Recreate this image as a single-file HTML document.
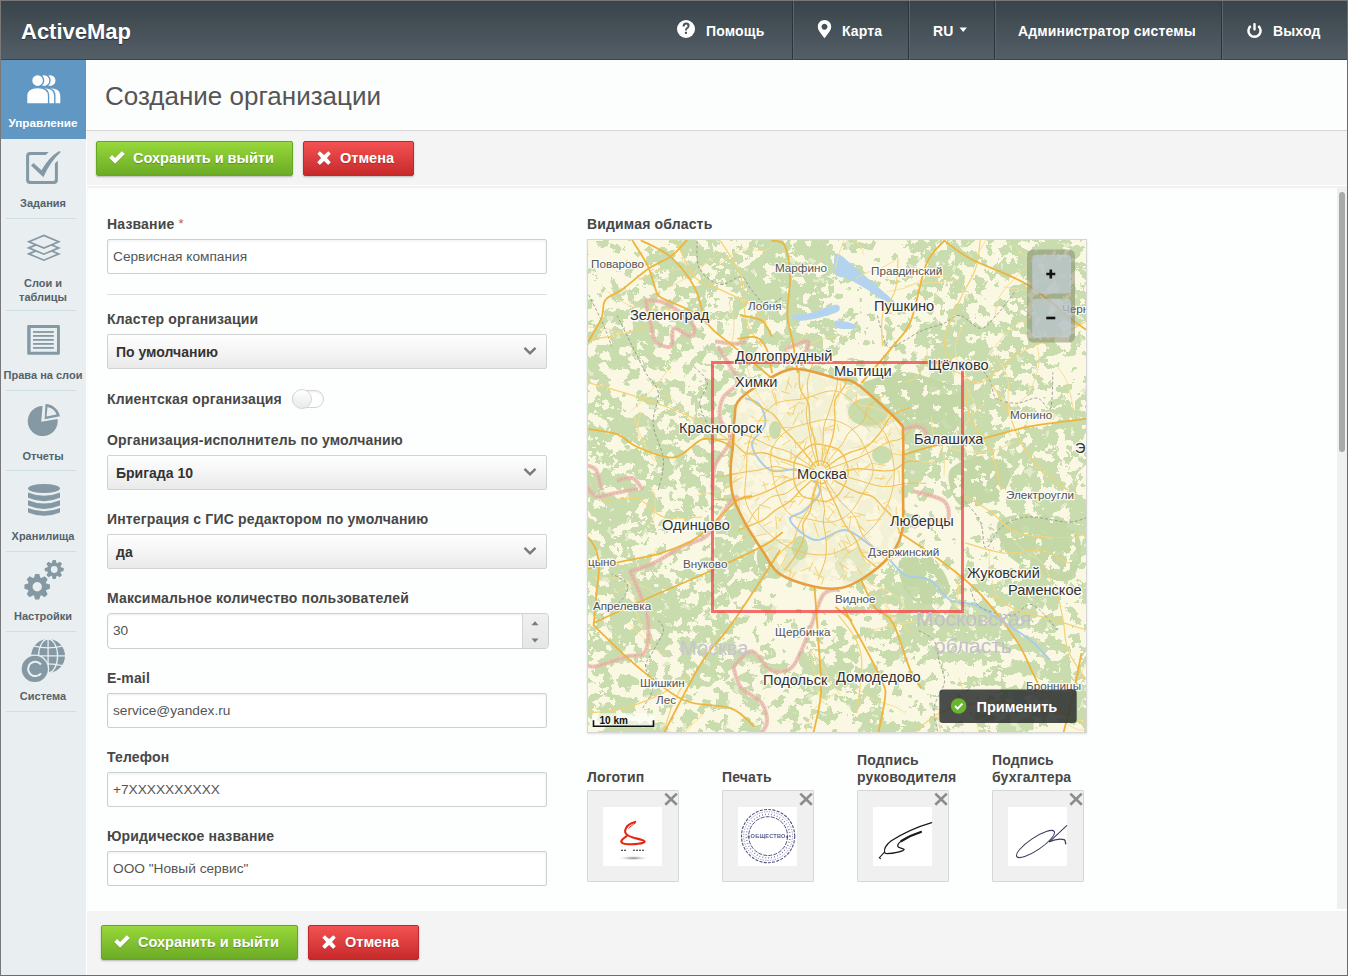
<!DOCTYPE html>
<html><head><meta charset="utf-8">
<style>
*{box-sizing:border-box;margin:0;padding:0}
html,body{width:1348px;height:976px;overflow:hidden;background:#fff}
body{font-family:"Liberation Sans",sans-serif;position:relative}
.abs{position:absolute}
#frame{position:absolute;left:0;top:0;width:1348px;height:976px;border:1px solid #787878;border-right-color:#6c6c6c;border-bottom-color:#6c6c6c;pointer-events:none;z-index:50}
#hdr{position:absolute;left:0;top:0;width:1348px;height:60px;background:linear-gradient(#39434a,#535e66);border-bottom:1px solid #3b444a}
#logo{position:absolute;left:21px;top:19px;font-size:22px;font-weight:bold;color:#fff;letter-spacing:0px;text-shadow:0 1px 1px rgba(0,0,0,.5)}
.nav{position:absolute;top:0;height:60px;color:#fff;font-size:14px;font-weight:bold;letter-spacing:.15px}
.nav span{position:absolute;top:23px;white-space:nowrap}
.sep{position:absolute;top:1px;width:2px;height:59px;border-left:1px solid #2d353b;border-right:1px solid #5a666d}
#side{position:absolute;left:0;top:60px;width:86px;height:916px;background:#e9eef1}
.si{position:absolute;left:0;width:86px;text-align:center;font-size:11px;font-weight:bold;color:#56626a}
.si .lbl{position:absolute;left:0;width:86px;text-align:center;line-height:13px}
.sline{position:absolute;left:6px;width:70px;height:1px;background:#cfdde5}
#main{position:absolute;left:86px;top:60px;width:1261px;height:915px;background:#fff}
#titlebar{position:absolute;left:0;top:0;width:1261px;height:71px;background:#fcfdfd;border-bottom:1px solid #d6d6d6}
#title{position:absolute;left:19px;top:21px;font-size:26px;color:#555;white-space:nowrap}
.tb{position:absolute;left:1px;width:1260px;background:#f4f4f4}
.btn{position:absolute;height:35px;border-radius:2px;color:#fff;font-size:14.5px;font-weight:bold;white-space:nowrap;text-shadow:0 1px 1px rgba(0,0,0,.25)}
.bg{background:linear-gradient(#97d83a,#6cab26);border:1px solid #64a823;box-shadow:0 1px 2px rgba(0,0,0,.25)}
.br{background:linear-gradient(#f45252,#c7292b);border:1px solid #c0292b;box-shadow:0 1px 2px rgba(0,0,0,.25)}
.btn span{position:absolute;top:8px}
#panel{position:absolute;left:1px;top:126px;width:1260px;height:723px;background:#fdfefe;box-shadow:inset 0 2px 2px rgba(0,0,0,.06)}
.lab{position:absolute;font-size:14px;font-weight:bold;color:#474747;white-space:nowrap;line-height:16px;letter-spacing:.16px}
.inp{position:absolute;left:107px;width:440px;height:35px;border:1px solid #cbd0d5;border-radius:2px;background:#fff;box-shadow:inset 0 1px 3px rgba(0,0,0,.07)}
.inp span{position:absolute;left:5px;top:9px;font-size:13.7px;color:#555;line-height:16px;white-space:nowrap}
.sel{position:absolute;left:107px;width:440px;height:35px;border:1px solid #d2d2d2;border-radius:2px;background:linear-gradient(#fefefe 0%,#f6f6f6 45%,#e9e9e9 100%)}
.sel span{position:absolute;left:8px;top:9px;font-size:14px;font-weight:bold;color:#333;line-height:16px;white-space:nowrap}
.chev{position:absolute;left:415px;top:11.3px;width:14px;height:10px}
.ibox{position:absolute;width:92px;height:92px;background:#f0f0f0;border:1px solid #d6d6d6;border-radius:1px}
.ibox .img{position:absolute;left:15px;top:16px;width:59px;height:59px;background:#fff}
.ibox .x{position:absolute;right:2px;top:2px;width:12px;height:12px}
</style></head><body>
<div id="hdr">
  <div id="logo">ActiveMap</div>
  <div class="sep" style="left:792px"></div>
  <div class="sep" style="left:908px"></div>
  <div class="sep" style="left:994px"></div>
  <div class="sep" style="left:1221px"></div>
  <svg class="abs" style="left:0;top:0" width="1348" height="60">
    <circle cx="686" cy="29" r="9" fill="#fff"/>
    <path d="M682.6,26.6 Q682.6,22.6 686.2,22.6 Q689.6,22.6 689.6,25.8 Q689.6,27.6 687.6,28.8 Q686.9,29.3 686.9,30.6 L685,30.6 Q685,28.4 686.4,27.6 Q687.5,26.9 687.5,25.9 Q687.5,24.5 686.1,24.5 Q684.7,24.5 684.7,26.6 Z" fill="#47525a"/>
    <rect x="684.9" y="31.8" width="2.1" height="2.1" fill="#47525a"/>
    <path d="M824.5,20 C820.6,20 817.8,23 817.8,26.7 C817.8,30.6 822,34.5 824.5,38.3 C827,34.5 831.2,30.6 831.2,26.7 C831.2,23 828.4,20 824.5,20 Z M824.5,23.7 A3,3 0 1,1 824.49,23.7 Z" fill="#fff" fill-rule="evenodd"/>
    <path d="M959.5,27.6 L966.9,27.6 L963.2,32 Z" fill="#fff"/>
    <path d="M1250.7,26 A6.1,6.1 0 1,0 1258.3,26" fill="none" stroke="#fff" stroke-width="2.5"/>
    <rect x="1253.3" y="23" width="2.4" height="7.4" rx="1" fill="#fff"/>
  </svg>
  <div class="nav" style="left:706px"><span>Помощь</span></div>
  <div class="nav" style="left:842px"><span>Карта</span></div>
  <div class="nav" style="left:933px"><span>RU</span></div>
  <div class="nav" style="left:1018px"><span>Администратор системы</span></div>
  <div class="nav" style="left:1273px"><span>Выход</span></div>
</div>
<div id="side">
  <div class="abs" style="left:1px;top:0;width:85px;height:79px;background:#6097c3"></div>
  <div class="sline" style="top:158px"></div>
  <div class="sline" style="top:250px"></div>
  <div class="sline" style="top:330px"></div>
  <div class="sline" style="top:410px"></div>
  <div class="sline" style="top:491px"></div>
  <div class="sline" style="top:571px"></div>
  <div class="sline" style="top:651px"></div>
  <div class="si" style="top:0;color:#fff"><div class="lbl" style="top:56px;color:#fff;font-size:11.7px">Управление</div></div>
  <div class="si"><div class="lbl" style="top:136.5px">Задания</div></div>
  <div class="si"><div class="lbl" style="top:216px;line-height:14px">Слои и<br>таблицы</div></div>
  <div class="si"><div class="lbl" style="top:308.5px">Права на слои</div></div>
  <div class="si"><div class="lbl" style="top:389.5px">Отчеты</div></div>
  <div class="si"><div class="lbl" style="top:469.5px">Хранилища</div></div>
  <div class="si"><div class="lbl" style="top:549.5px">Настройки</div></div>
  <div class="si"><div class="lbl" style="top:629.5px">Система</div></div>
  <svg class="abs" style="left:0;top:-60px" width="86" height="976">
    <g fill="#fff" stroke="#6097c3" stroke-width="1.4">
      <circle cx="50.2" cy="80.6" r="6"/>
      <path d="M38.5,103.9 L38.5,95.5 Q38.5,87.6 49.6,87.6 Q61,87.6 61,95.5 L61,103.9 Z"/>
      <circle cx="44" cy="80.6" r="6"/>
      <path d="M32.3,103.9 L32.3,95.5 Q32.3,87.6 43.4,87.6 Q54.8,87.6 54.8,95.5 L54.8,103.9 Z"/>
      <circle cx="37.6" cy="80.6" r="6"/>
      <path d="M26.6,103.9 L26.6,96 Q26.6,87.6 37.6,87.6 Q48.6,87.6 48.6,96 L48.6,103.9 Z"/>
    </g>
    <g fill="#8499a4">
      <path d="M30.5,152 L48.7,152 L45.8,155 L30.5,155 Q29.1,155 29.1,156.4 L29.1,179.6 Q29.1,181 30.5,181 L53.5,181 Q54.9,181 54.9,179.6 L54.9,163.6 L57.9,160.6 L57.9,180 Q57.9,184 53.9,184 L30.1,184 Q26.1,184 26.1,180 L26.1,156 Q26.1,152 30.1,152 Z"/>
      <path d="M31,165.4 L33.5,162.9 L41.5,170.2 Q49,157 58.8,151.2 Q60.3,150.9 60.8,152.1 Q50,162 43.4,177.3 Z"/>
    </g>
    <g fill="none" stroke="#8499a4" stroke-width="1.7" stroke-linejoin="miter">
      <path d="M28.8,253.9 L43.9,247.5 L58.8,253.9 L43.9,260.2 Z" fill="#e9eef1"/>
      <path d="M28.8,247.9 L43.9,241.6 L58.8,247.9 L43.9,254.2 Z" fill="#e9eef1"/>
      <path d="M28.8,241.8 L43.9,235.5 L58.8,241.8 L43.9,248.1 Z" fill="#e9eef1"/>
    </g>
    <g fill="#8499a4">
      <path d="M28.5,325 L58.6,325 Q59.9,325 59.9,326.3 L59.9,353.4 Q59.9,354.7 58.6,354.7 L28.5,354.7 Q27.2,354.7 27.2,353.4 L27.2,326.3 Q27.2,325 28.5,325 Z M30.6,328 L30.6,351.7 L57,351.7 L57,328 Z" fill-rule="evenodd"/>
      <rect x="33" y="331.1" width="20.8" height="1.8"/>
      <rect x="33" y="335" width="20.8" height="1.8"/>
      <rect x="33" y="339" width="20.8" height="1.8"/>
      <rect x="33" y="343" width="20.8" height="1.8"/>
      <rect x="33" y="347" width="20.8" height="1.8"/>
    </g>
    <g fill="#8499a4">
      <path d="M41.2,421.7 L42.6,406.1 A15,15 0 1,0 57.6,419.1 Z"/>
      <path d="M45.5,404.1 A15,15 0 0,1 59.9,416.3 L44.6,419.2 Z M47.5,407 L46.5,416.6 L56.6,414.6 A12,12 0 0,0 47.5,407 Z" fill-rule="evenodd"/>
    </g>
    <g fill="#8499a4">
      <ellipse cx="44" cy="488.5" rx="16" ry="4.6"/>
      <path d="M28,492.4 Q44,499 60,492.4 L60,497.8 Q44,504.6 28,497.8 Z"/>
      <path d="M28,500.2 Q44,506.8 60,500.2 L60,505.6 Q44,512.4 28,505.6 Z"/>
      <path d="M28,508 Q44,514.6 60,508 L60,512.4 Q44,519 28,512.4 Z"/>
    </g>
    <g fill="#8499a4" fill-rule="evenodd" transform="translate(18,560)">
      <path d="M34.01,17.64 L35.11,13.97 L39.29,13.97 L40.39,17.64 L41.35,18.04 L44.72,16.22 L47.68,19.18 L45.86,22.55 L46.26,23.51 L49.93,24.61 L49.93,28.79 L46.26,29.89 L45.86,30.85 L47.68,34.22 L44.72,37.18 L41.35,35.36 L40.39,35.76 L39.29,39.43 L35.11,39.43 L34.01,35.76 L33.05,35.36 L29.68,37.18 L26.72,34.22 L28.54,30.85 L28.14,29.89 L24.47,28.79 L24.47,24.61 L28.14,23.51 L28.54,22.55 L26.72,19.18 L29.68,16.22 L33.05,18.04Z M41.90,26.70 A4.7,4.7 0 1,0 32.50,26.70 A4.7,4.7 0 1,0 41.90,26.70Z" transform="translate(-18,0)"/>
      <path d="M51.85,2.91 L52.71,0.02 L55.69,0.02 L56.55,2.91 L57.20,3.17 L59.85,1.74 L61.96,3.85 L60.53,6.50 L60.79,7.15 L63.68,8.01 L63.68,10.99 L60.79,11.85 L60.53,12.50 L61.96,15.15 L59.85,17.26 L57.20,15.83 L56.55,16.09 L55.69,18.98 L52.71,18.98 L51.85,16.09 L51.20,15.83 L48.55,17.26 L46.44,15.15 L47.87,12.50 L47.61,11.85 L44.72,10.99 L44.72,8.01 L47.61,7.15 L47.87,6.50 L46.44,3.85 L48.55,1.74 L51.20,3.17Z M57.60,9.50 A3.4,3.4 0 1,0 50.80,9.50 A3.4,3.4 0 1,0 57.60,9.50Z" transform="translate(-18,0)"/>
    </g>
    <g>
      <circle cx="48.1" cy="655.9" r="16.9" fill="#8499a4"/>
      <g fill="none" stroke="#e9eef1" stroke-width="1.3">
        <ellipse cx="48.1" cy="655.9" rx="9.5" ry="16.9"/>
        <line x1="48.1" y1="639" x2="48.1" y2="673"/>
        <line x1="31" y1="655.9" x2="65" y2="655.9"/>
        <path d="M34,646.2 Q48.1,649.5 62.2,646.2"/>
        <path d="M34,665.6 Q48.1,662.3 62.2,665.6"/>
      </g>
      <circle cx="34.8" cy="668.9" r="14.4" fill="#e9eef1"/>
      <circle cx="34.8" cy="668.9" r="13.1" fill="#8499a4"/>
      <path d="M41,664.5 A7.2,7.2 0 1,0 41,673.3" fill="none" stroke="#e9eef1" stroke-width="2.1"/>
    </g>
  </svg>
</div>
<div id="main">
  <div id="titlebar"><div id="title">Создание организации</div></div>
  <div class="tb" style="top:71px;height:54px">
    <div class="btn bg" style="left:9px;top:10px;width:197px"><span style="left:36px">Сохранить и выйти</span></div>
    <div class="btn br" style="left:216px;top:10px;width:111px"><span style="left:36px">Отмена</span></div>
  </div>
  <div id="panel"></div>
  <div class="tb" style="top:851px;height:64px">
    <div class="btn bg" style="left:14px;top:14px;width:197px"><span style="left:36px">Сохранить и выйти</span></div>
    <div class="btn br" style="left:221px;top:14px;width:111px"><span style="left:36px">Отмена</span></div>
  </div>
</div>
<div id="form" class="abs" style="left:0;top:0;width:1348px;height:976px">
  <div class="lab" style="left:107px;top:216px">Название <span style="color:#b55a55;font-weight:normal;font-size:13px;position:relative;top:-1px">*</span></div>
  <div class="inp" style="top:239px"><span>Сервисная компания</span></div>
  <div class="abs" style="left:107px;top:294px;width:440px;height:1px;background:#dedede"></div>
  <div class="lab" style="left:107px;top:311px">Кластер организации</div>
  <div class="sel" style="top:334px"><span>По умолчанию</span><svg class="chev" viewBox="0 0 14 10"><path d="M1.5,1.8 L7,7.4 L12.5,1.8" fill="none" stroke="#7a7a7a" stroke-width="2.4"/></svg></div>
  <div class="lab" style="left:107px;top:391px">Клиентская организация</div>
  <div class="abs" style="left:292px;top:390px;width:32px;height:18px;border:1px solid #d4d4d4;border-radius:9px;background:#fff;box-shadow:inset 0 1px 2px rgba(0,0,0,.08)"></div>
  <div class="abs" style="left:292px;top:389px;width:20px;height:20px;border:1px solid #d6d6d6;border-radius:50%;background:linear-gradient(#fff,#e9e9e9)"></div>
  <div class="lab" style="left:107px;top:432px">Организация-исполнитель по умолчанию</div>
  <div class="sel" style="top:455px"><span>Бригада 10</span><svg class="chev" viewBox="0 0 14 10"><path d="M1.5,1.8 L7,7.4 L12.5,1.8" fill="none" stroke="#7a7a7a" stroke-width="2.4"/></svg></div>
  <div class="lab" style="left:107px;top:511px">Интеграция с ГИС редактором по умолчанию</div>
  <div class="sel" style="top:534px"><span>да</span><svg class="chev" viewBox="0 0 14 10"><path d="M1.5,1.8 L7,7.4 L12.5,1.8" fill="none" stroke="#7a7a7a" stroke-width="2.4"/></svg></div>
  <div class="lab" style="left:107px;top:590px">Максимальное количество пользователей</div>
  <div class="inp" style="top:613px;width:442px;height:36px;border-radius:4px"><span>30</span>
    <div class="abs" style="left:414px;top:0;width:26px;height:34px;border-left:1px solid #d4d4d4;background:linear-gradient(#f0f0f0,#e6e6e6);border-radius:0 3px 3px 0"></div>
    <svg class="abs" style="left:414px;top:0" width="26" height="33"><path d="M9.5,11.2 L16.5,11.2 L13,7.2 Z M9.5,24.6 L16.5,24.6 L13,28.6 Z" fill="#7a7a7a"/></svg>
  </div>
  <div class="lab" style="left:107px;top:670px">E-mail</div>
  <div class="inp" style="top:693px"><span>service@yandex.ru</span></div>
  <div class="lab" style="left:107px;top:749px">Телефон</div>
  <div class="inp" style="top:772px"><span>+7XXXXXXXXXX</span></div>
  <div class="lab" style="left:107px;top:828px">Юридическое название</div>
  <div class="inp" style="top:851px"><span>ООО "Новый сервис"</span></div>
  <div class="lab" style="left:587px;top:216px">Видимая область</div>
</div>
<svg class="abs" style="left:0;top:0;z-index:5" width="1348" height="976"><g fill="#fff" style="filter:drop-shadow(0 1px 0 rgba(0,0,0,.15))">
<path d="M109.3,158.1 L112.1,155.1 L115.1,157.9 L121.8,151.2 L124.8,154.1 L115.1,163.8Z"/><path d="M317.3,153.8 L319.8,151.2 L324.1,155.1 L328.3,151.2 L330.8,153.8 L327.0,158.1 L330.8,162.3 L328.2,165.0 L324.1,161.0 L319.8,165.0 L317.2,162.3 L321.1,158.1Z"/><path d="M114.3,942.1 L117.1,939.1 L120.1,941.9 L126.8,935.2 L129.8,938.1 L120.1,947.8Z"/><path d="M322.3,937.8 L324.8,935.2 L329.1,939.1 L333.3,935.2 L335.8,937.8 L332.0,942.1 L335.8,946.3 L333.2,949.0 L329.1,945.0 L324.8,949.0 L322.2,946.3 L326.1,942.1Z"/></g></svg>
<div class="abs" style="left:1337px;top:187px;width:10px;height:722px;background:#f0f0f0"></div>
<div class="abs" style="left:1339px;top:192px;width:6px;height:260px;border-radius:3px;background:#a9a9a9"></div>
<div class="lab" style="left:587px;top:769px;line-height:17px">Логотип</div>
<div class="ibox" style="left:587px;top:790px"><div class="img"></div></div>
<div class="lab" style="left:722px;top:769px;line-height:17px">Печать</div>
<div class="ibox" style="left:722px;top:790px"><div class="img"></div></div>
<div class="lab" style="left:857px;top:752px;line-height:17px">Подпись<br>руководителя</div>
<div class="ibox" style="left:857px;top:790px"><div class="img"></div></div>
<div class="lab" style="left:992px;top:752px;line-height:17px">Подпись<br>бухгалтера</div>
<div class="ibox" style="left:992px;top:790px"><div class="img"></div></div>
<svg class="abs" style="left:0;top:0;z-index:6" width="1348" height="976"><path d="M665.3,793.6 L676.8,804.7 M676.8,793.6 L665.3,804.7" stroke="#8c8c8c" stroke-width="2.6" fill="none"/><path d="M800.3,793.6 L811.8,804.7 M811.8,793.6 L800.3,804.7" stroke="#8c8c8c" stroke-width="2.6" fill="none"/><path d="M935.3,793.6 L946.8,804.7 M946.8,793.6 L935.3,804.7" stroke="#8c8c8c" stroke-width="2.6" fill="none"/><path d="M1070.3,793.6 L1081.8,804.7 M1081.8,793.6 L1070.3,804.7" stroke="#8c8c8c" stroke-width="2.6" fill="none"/><defs><radialGradient id="shd"><stop offset="0" stop-color="#777"/><stop offset="1" stop-color="#fff" stop-opacity="0"/></radialGradient></defs>
<ellipse cx="633.4" cy="858.1" rx="17" ry="2.4" fill="url(#shd)"/>
<path d="M635.2,821.9 C631,823 626,826 625.1,830.5 C624.6,834 628,836 633,837.6 C638,839 644.6,840 644.6,841.6 C644,843.6 634,844.6 627.9,844.2 C623,844 620.5,842.6 621.6,840.6 C622.4,839 625,837.4 626.5,836.1" fill="none" stroke="#e52610" stroke-width="2.1" stroke-linecap="round"/>
<path d="M635.8,822.6 C633,825 630,826.5 628.6,828.4" fill="none" stroke="#e52610" stroke-width="1"/>
<path d="M621,850.2 h2 M624,850.2 h2 M633,850.2 h2 M636,850.2 h2 M639,850.2 h2 M642,850.2 h2" stroke="#222" stroke-width="1.1"/>
<g fill="none" stroke="#3d3f7a">
<circle cx="768.1" cy="836.1" r="26.6" stroke-width="1.1" stroke-dasharray="3 1.3" opacity=".9"/>
<circle cx="768.1" cy="836.1" r="24.4" stroke-width=".7" stroke-dasharray="1.2 1.3" opacity=".8"/>
<circle cx="768.1" cy="836.1" r="21.8" stroke-width="1.6" stroke-dasharray=".8 2.2" opacity=".7"/>
<circle cx="768.1" cy="836.1" r="19.4" stroke-width="1" stroke-dasharray="4 1.2" opacity=".9"/>
</g>
<text x="768.1" y="838.3" text-anchor="middle" style="font-family:Liberation Sans,sans-serif;font-size:5.6px;font-weight:bold;letter-spacing:.2px" fill="#3d3f7a" opacity=".85">«ОБЩЕСТВО»</text>
<g fill="none" stroke="#1a1a1a" stroke-linecap="round">
<path d="M931.7,822.6 C920,826 905,832 890.9,841 C886,845 883.9,849 884.6,852.2" stroke-width="1.2"/>
<path d="M920.9,832 C913,834.5 905,838 901.4,841 C898.5,843 897.5,845.5 897.9,846.6 C899,848 903.6,848.6 904.1,849.4 C904,851 894,853.6 886.7,853.6 C885,853.4 884.5,852.6 884.5,852.2" stroke-width="1.3"/>
<path d="M920.9,832 C913,834.5 906,838 901.4,841" stroke-width="2.2"/>
<path d="M884.5,852.2 L879.4,857.7 L880.4,858.6" stroke-width="1.1"/>
</g>
<g fill="none" stroke="#3a3f60" stroke-width="1.1" stroke-linecap="round">
<ellipse cx="1035.5" cy="844" rx="22.5" ry="6.2" transform="rotate(-34 1035.5 844)"/>
<path d="M1049.6,841.7 L1066.7,825.7"/>
<path d="M1049.6,841.7 C1054,839.6 1060,838.6 1064.2,839.6 C1066,840.6 1065,842.6 1065.8,843.8" stroke-width="1.3"/>
</g>
</svg>
<!--MAP-->
<div class="abs" style="left:587px;top:239px;width:500px;height:494px;border:1px solid #d6d6d6;box-shadow:0 1px 2px rgba(0,0,0,.12);z-index:3"></div>
<svg class="abs" style="left:588px;top:240px;z-index:4" width="498" height="492" viewBox="0 0 498 492">
<defs>
<filter id="fo" x="0" y="0" width="498" height="492" filterUnits="userSpaceOnUse" color-interpolation-filters="sRGB">
<feTurbulence type="fractalNoise" baseFrequency="0.085" numOctaves="4" seed="11" result="m1"/>
<feColorMatrix in="m1" type="matrix" values="1 0 0 0 0  1 0 0 0 0  1 0 0 0 0  0 0 0 0 1" result="n1"/>
<feTurbulence type="fractalNoise" baseFrequency="0.012" numOctaves="2" seed="4" result="m2"/>
<feColorMatrix in="m2" type="matrix" values="1 0 0 0 0  1 0 0 0 0  1 0 0 0 0  0 0 0 0 1" result="n2"/>
<feComposite in="n1" in2="n2" operator="arithmetic" k1="0" k2="0.8" k3="0.5" k4="-0.15" result="n"/>
<feColorMatrix in="n" type="matrix" values="0 0 0 0 0  0 0 0 0 0  0 0 0 0 0  1 0 0 0 0" result="a"/>
<feComponentTransfer in="a" result="t"><feFuncA type="discrete" tableValues="1 1 1 1 1 1 1 1 1 1 0 0 0 0 0 0 0 0 0 0"/></feComponentTransfer>
<feFlood flood-color="#c8dcae" result="g"/>
<feComposite in="g" in2="t" operator="in"/>
</filter>
<filter id="fo2" x="0" y="0" width="498" height="492" filterUnits="userSpaceOnUse" color-interpolation-filters="sRGB">
<feTurbulence type="fractalNoise" baseFrequency="0.11" numOctaves="3" seed="3" result="n"/>
<feColorMatrix in="n" type="matrix" values="0 0 0 0 0  0 0 0 0 0  0 0 0 0 0  1 0 0 0 0" result="a"/>
<feComponentTransfer in="a" result="t"><feFuncA type="discrete" tableValues="1 1 1 0 0 0 0 0 0 0"/></feComponentTransfer>
<feFlood flood-color="#faf7e2" result="g"/>
<feComposite in="g" in2="t" operator="in"/>
</filter>
<filter id="fod" x="0" y="0" width="498" height="492" filterUnits="userSpaceOnUse" color-interpolation-filters="sRGB">
<feTurbulence type="fractalNoise" baseFrequency="0.09" numOctaves="4" seed="23" result="m1"/>
<feColorMatrix in="m1" type="matrix" values="0 0 0 0 0  0 0 0 0 0  0 0 0 0 0  1 0 0 0 0" result="a"/>
<feComponentTransfer in="a" result="t"><feFuncA type="discrete" tableValues="1 1 1 1 1 1 1 1 1 1 1 1 0 0 0 0 0 0 0 0"/></feComponentTransfer>
<feFlood flood-color="#c3d8a6" result="g"/>
<feComposite in="g" in2="t" operator="in"/>
</filter>
<mask id="cityMask"><rect width="498" height="492" fill="#fff"/><path d="M153.0,158.0 C160.9,150.2 183.3,136.7 194.0,132.0 C204.7,127.3 207.7,128.8 217.0,130.0 C226.3,131.2 241.4,136.7 250.0,139.0 C258.6,141.3 258.7,137.0 268.7,144.0 C278.7,151.0 302.3,172.7 310.0,181.0 C317.7,189.3 314.2,185.8 315.0,194.0 C315.8,202.2 315.0,220.7 315.0,230.0 C315.0,239.3 315.2,239.6 315.0,250.0 C314.8,260.4 316.4,281.1 313.8,292.5 C311.2,303.9 306.3,310.5 299.6,318.3 C292.9,326.0 281.6,334.1 273.8,339.0 C266.0,343.9 260.9,346.7 253.0,348.0 C245.1,349.3 236.7,349.1 226.5,346.7 C216.3,344.3 200.0,339.4 191.6,333.8 C183.2,328.2 181.6,321.2 176.0,313.0 C170.4,304.8 163.2,294.2 158.0,284.7 C152.8,275.2 147.6,265.1 145.0,256.0 C142.4,246.9 142.6,238.6 142.6,230.0 C142.6,221.4 144.3,213.2 145.0,204.6 C145.7,196.1 145.2,186.5 146.5,178.7 C147.8,170.9 145.1,165.8 153.0,158.0Z" fill="#666"/></mask>
<clipPath id="mclip"><rect width="498" height="492"/></clipPath>
</defs>
<g clip-path="url(#mclip)">
<rect width="498" height="492" fill="#faf7e2"/>
<g mask="url(#cityMask)"><rect width="498" height="492" filter="url(#fo)"/></g>
<rect width="498" height="492" filter="url(#fo2)" opacity=".55"/>

<clipPath id="bigfc"><path d="M258.0,152.0 C261.7,147.0 272.2,143.3 282.0,140.0 C291.8,136.7 306.2,132.0 317.0,132.0 C327.8,132.0 337.5,136.7 347.0,140.0 C356.5,143.3 369.8,145.3 374.0,152.0 C378.2,158.7 374.8,172.0 372.0,180.0 C369.2,188.0 364.5,198.0 357.0,200.0 C349.5,202.0 334.7,195.2 327.0,192.0 C319.3,188.8 316.8,181.7 311.0,181.0 C305.2,180.3 298.5,187.3 292.0,188.0 C285.5,188.7 277.3,188.0 272.0,185.0 C266.7,182.0 262.3,175.5 260.0,170.0 C257.7,164.5 254.3,157.0 258.0,152.0Z"/><path d="M250.0,310.0 C253.7,306.3 264.3,307.0 270.0,308.0 C275.7,309.0 282.3,311.5 284.0,316.0 C285.7,320.5 283.7,330.7 280.0,335.0 C276.3,339.3 267.3,342.8 262.0,342.0 C256.7,341.2 250.0,335.3 248.0,330.0 C246.0,324.7 246.3,313.7 250.0,310.0Z"/><path d="M172.0,305.0 C177.0,300.0 195.3,297.5 202.0,300.0 C208.7,302.5 213.7,314.2 212.0,320.0 C210.3,325.8 198.7,333.3 192.0,335.0 C185.3,336.7 175.3,335.0 172.0,330.0 C168.7,325.0 167.0,310.0 172.0,305.0Z"/><path d="M362.0,230.0 C367.0,221.7 392.0,214.2 402.0,215.0 C412.0,215.8 421.2,227.5 422.0,235.0 C422.8,242.5 415.3,255.0 407.0,260.0 C398.7,265.0 379.5,270.0 372.0,265.0 C364.5,260.0 357.0,238.3 362.0,230.0Z"/><path d="M412.0,280.0 C419.5,274.2 448.7,271.7 462.0,275.0 C475.3,278.3 488.7,289.2 492.0,300.0 C495.3,310.8 490.3,335.0 482.0,340.0 C473.7,345.0 452.8,335.0 442.0,330.0 C431.2,325.0 422.0,318.3 417.0,310.0 C412.0,301.7 404.5,285.8 412.0,280.0Z"/><path d="M312.0,320.0 C316.2,314.2 333.7,310.0 342.0,315.0 C350.3,320.0 362.8,341.7 362.0,350.0 C361.2,358.3 344.5,365.0 337.0,365.0 C329.5,365.0 321.2,357.5 317.0,350.0 C312.8,342.5 307.8,325.8 312.0,320.0Z"/></clipPath>
<rect width="498" height="492" filter="url(#fod)" clip-path="url(#bigfc)"/>
<path d="M153.0,158.0 C160.9,150.2 183.3,136.7 194.0,132.0 C204.7,127.3 207.7,128.8 217.0,130.0 C226.3,131.2 241.4,136.7 250.0,139.0 C258.6,141.3 258.7,137.0 268.7,144.0 C278.7,151.0 302.3,172.7 310.0,181.0 C317.7,189.3 314.2,185.8 315.0,194.0 C315.8,202.2 315.0,220.7 315.0,230.0 C315.0,239.3 315.2,239.6 315.0,250.0 C314.8,260.4 316.4,281.1 313.8,292.5 C311.2,303.9 306.3,310.5 299.6,318.3 C292.9,326.0 281.6,334.1 273.8,339.0 C266.0,343.9 260.9,346.7 253.0,348.0 C245.1,349.3 236.7,349.1 226.5,346.7 C216.3,344.3 200.0,339.4 191.6,333.8 C183.2,328.2 181.6,321.2 176.0,313.0 C170.4,304.8 163.2,294.2 158.0,284.7 C152.8,275.2 147.6,265.1 145.0,256.0 C142.4,246.9 142.6,238.6 142.6,230.0 C142.6,221.4 144.3,213.2 145.0,204.6 C145.7,196.1 145.2,186.5 146.5,178.7 C147.8,170.9 145.1,165.8 153.0,158.0Z" fill="#fbf5dc" opacity=".55"/>
<ellipse cx="280.0" cy="172.0" rx="20" ry="14" fill="#c9dcae"/>
<ellipse cx="294.0" cy="215.0" rx="10" ry="9" fill="#c9dcae"/>
<ellipse cx="212.0" cy="308.0" rx="8" ry="12" fill="#c9dcae"/>
<ellipse cx="187.0" cy="190.0" rx="6" ry="9" fill="#c9dcae"/>
<ellipse cx="262.0" cy="140.0" rx="8" ry="5" fill="#c9dcae"/>
<path d="M248.0,13.5 C251.0,12.2 260.0,21.7 266.1,26.4 C272.1,31.1 277.9,36.5 284.1,41.9 C290.4,47.3 299.4,54.8 303.5,58.7 C307.6,62.5 309.8,64.7 308.7,65.1 C307.6,65.6 302.0,63.8 297.1,61.3 C292.1,58.7 285.0,53.3 279.0,49.6 C273.0,46.0 266.1,41.9 260.9,39.3 C255.7,36.7 250.2,38.5 248.0,34.1 C245.8,29.8 245.0,14.8 248.0,13.5Z" fill="#b3d3ee"/>
<path d="M204.6,75.5 C206.7,74.2 216.6,74.4 222.6,72.9 C228.7,71.4 236.1,67.7 240.7,66.4 C245.3,65.1 248.5,64.3 250.0,65.1 C251.6,66.0 253.3,69.4 250.0,71.6 C246.7,73.7 237.1,76.5 230.4,78.0 C223.7,79.5 214.0,81.1 209.7,80.6 C205.4,80.2 202.4,76.8 204.6,75.5Z" fill="#b3d3ee"/>
<path d="M248.0,80.6 C250.6,80.0 260.3,81.9 263.5,83.2 C266.7,84.5 268.9,87.4 267.4,88.4 C265.9,89.3 257.7,89.1 254.5,88.9 C251.2,88.7 249.1,88.5 248.0,87.1 C246.9,85.7 245.4,81.3 248.0,80.6Z" fill="#b3d3ee"/>
<path d="M426.2,455.1 C427.4,454.1 434.3,457.1 436.5,459.0 C438.6,460.9 440.4,465.7 439.1,466.8 C437.8,467.8 430.9,467.4 428.7,465.5 C426.6,463.5 424.9,456.2 426.2,455.1Z" fill="#b3d3ee"/>
<path d="M157.0,158.0 C159.5,159.2 168.7,160.5 172.0,165.0 C175.3,169.5 178.3,178.3 177.0,185.0 C175.7,191.7 163.2,197.5 164.0,205.0 C164.8,212.5 174.0,225.8 182.0,230.0 C190.0,234.2 203.7,226.7 212.0,230.0 C220.3,233.3 231.2,243.3 232.0,250.0 C232.8,256.7 222.0,265.0 217.0,270.0 C212.0,275.0 200.3,275.0 202.0,280.0 C203.7,285.0 217.8,298.3 227.0,300.0 C236.2,301.7 247.8,289.2 257.0,290.0 C266.2,290.8 275.3,300.8 282.0,305.0 C288.7,309.2 291.2,310.0 297.0,315.0 C302.8,320.0 309.5,330.8 317.0,335.0 C324.5,339.2 334.5,335.8 342.0,340.0 C349.5,344.2 354.5,355.8 362.0,360.0 C369.5,364.2 378.7,361.7 387.0,365.0 C395.3,368.3 402.8,374.2 412.0,380.0 C421.2,385.8 433.7,393.3 442.0,400.0 C450.3,406.7 458.7,416.7 462.0,420.0" fill="none" stroke="#a9cde9" stroke-width="2"/>
<path d="M238.0,231.7 C240.9,231.6 250.0,231.8 255.5,231.3 C261.0,230.8 265.5,228.8 271.2,228.7 C276.9,228.5 283.9,230.2 289.7,230.5 C295.4,230.7 300.9,231.6 305.8,230.1 C310.7,228.6 314.4,223.0 319.1,221.6 C323.8,220.1 331.6,221.5 334.2,221.4" fill="none" stroke="#f1c055" stroke-width="1.4"/>
<path d="M237.8,233.5 C240.1,233.8 246.1,234.2 251.6,235.3 C257.1,236.5 264.7,238.7 271.0,240.4 C277.3,242.2 284.2,244.8 289.4,245.7 C294.5,246.7 296.9,246.8 301.8,246.4 C306.6,246.0 312.4,243.9 318.4,243.3 C324.5,242.8 334.9,243.3 338.2,243.3" fill="none" stroke="#f1c055" stroke-width="1"/>
<path d="M237.2,235.1 C240.1,236.7 248.9,242.0 254.3,244.9 C259.6,247.7 264.1,250.1 269.2,252.1 C274.3,254.0 280.6,254.3 284.7,256.6 C288.9,259.0 290.7,262.8 294.0,266.2 C297.2,269.6 301.3,272.7 304.2,276.9 C307.1,281.1 310.3,289.0 311.5,291.4" fill="none" stroke="#f1c055" stroke-width="1.4"/>
<path d="M235.7,236.9 C237.3,239.3 242.5,247.0 245.4,251.2 C248.3,255.4 249.6,258.0 253.1,262.1 C256.6,266.2 262.9,270.5 266.5,276.0 C270.1,281.4 271.6,289.8 274.7,295.0 C277.9,300.1 281.7,302.8 285.3,306.7 C288.9,310.6 294.5,316.5 296.4,318.4" fill="none" stroke="#f1c055" stroke-width="1"/>
<path d="M234.9,237.5 C235.8,239.5 238.0,244.5 240.4,249.6 C242.8,254.7 246.8,262.7 249.4,268.3 C252.0,273.9 253.1,278.4 256.1,283.5 C259.1,288.5 264.1,293.5 267.2,298.7 C270.3,303.9 271.2,309.9 274.6,314.6 C278.1,319.3 285.8,325.0 288.0,327.1" fill="none" stroke="#f1c055" stroke-width="1.4"/>
<path d="M232.4,238.3 C232.6,240.9 232.5,248.7 233.2,253.8 C233.9,258.8 236.1,264.0 236.5,268.7 C236.9,273.4 235.1,276.6 235.4,282.0 C235.7,287.4 237.9,294.7 238.2,301.0 C238.5,307.2 238.6,313.0 237.2,319.4 C235.9,325.9 231.2,336.4 230.0,339.7" fill="none" stroke="#f1c055" stroke-width="1"/>
<path d="M230.7,238.2 C229.9,240.9 227.1,249.4 225.6,254.9 C224.1,260.4 223.7,266.3 221.9,271.2 C220.2,276.1 216.0,279.6 214.9,284.3 C213.8,288.9 216.8,293.6 215.5,299.0 C214.1,304.4 210.0,311.3 206.9,316.6 C203.7,321.8 198.1,328.1 196.4,330.4" fill="none" stroke="#f1c055" stroke-width="1.4"/>
<path d="M229.7,237.8 C228.9,240.4 226.3,248.5 225.0,253.2 C223.6,257.9 224.0,260.9 221.8,265.9 C219.6,271.0 214.4,277.7 211.6,283.5 C208.9,289.3 208.1,296.4 205.0,301.0 C201.9,305.7 197.1,307.6 193.3,311.6 C189.5,315.5 184.1,322.5 182.3,324.7" fill="none" stroke="#f1c055" stroke-width="1"/>
<path d="M227.8,236.5 C225.5,238.6 218.3,245.0 213.9,249.1 C209.6,253.3 206.3,257.8 201.8,261.4 C197.3,264.9 191.5,267.3 187.2,270.4 C182.9,273.4 179.9,277.1 175.7,279.6 C171.5,282.1 166.3,283.7 162.1,285.5 C157.9,287.3 152.4,289.4 150.5,290.2" fill="none" stroke="#f1c055" stroke-width="1.4"/>
<path d="M226.9,235.3 C224.4,236.7 216.5,240.5 211.6,243.5 C206.7,246.5 202.6,251.1 197.8,253.4 C192.9,255.7 187.6,254.5 182.5,257.4 C177.5,260.3 171.3,266.5 167.5,270.8 C163.7,275.1 162.7,279.7 159.8,283.1 C156.9,286.5 151.8,289.8 150.2,291.1" fill="none" stroke="#f1c055" stroke-width="1"/>
<path d="M226.2,233.6 C224.1,234.2 218.1,235.8 213.6,237.0 C209.1,238.2 203.9,239.2 199.5,240.9 C195.0,242.6 191.1,245.4 187.0,247.4 C182.8,249.4 179.5,251.3 174.6,253.1 C169.7,255.0 162.6,257.5 157.7,258.6 C152.7,259.6 150.3,259.1 144.9,259.3 C139.5,259.4 128.6,259.5 125.3,259.5" fill="none" stroke="#f1c055" stroke-width="1.4"/>
<path d="M226.0,232.0 C223.9,231.9 217.8,231.6 213.5,231.2 C209.2,230.7 204.7,230.1 200.2,229.3 C195.7,228.5 191.1,226.4 186.4,226.5 C181.6,226.6 176.6,229.0 171.6,229.9 C166.6,230.9 162.2,231.1 156.4,232.1 C150.7,233.1 143.2,235.3 137.3,235.8 C131.4,236.4 123.9,235.5 121.3,235.4" fill="none" stroke="#f1c055" stroke-width="1"/>
<path d="M226.3,230.1 C223.8,229.1 216.9,226.1 211.2,224.2 C205.5,222.3 198.1,220.5 192.2,218.6 C186.2,216.7 181.2,213.6 175.5,212.7 C169.9,211.8 163.7,215.4 158.2,213.4 C152.7,211.4 147.6,203.0 142.4,200.7 C137.3,198.3 129.8,199.5 127.3,199.3" fill="none" stroke="#f1c055" stroke-width="1.4"/>
<path d="M226.7,229.0 C225.0,227.7 220.6,224.5 216.3,221.6 C211.9,218.8 206.1,214.3 200.8,211.9 C195.4,209.4 189.4,208.9 184.0,206.8 C178.6,204.7 173.5,201.6 168.4,199.4 C163.2,197.2 158.3,194.9 153.1,193.6 C147.9,192.3 139.9,192.1 137.3,191.8" fill="none" stroke="#f1c055" stroke-width="1"/>
<path d="M227.9,227.4 C226.0,225.0 220.6,217.7 216.8,213.0 C213.0,208.2 208.7,203.0 205.1,198.9 C201.6,194.8 198.5,192.6 195.3,188.6 C192.1,184.6 190.5,179.0 186.0,174.9 C181.5,170.8 173.1,167.7 168.3,163.9 C163.4,160.1 158.9,154.1 157.1,152.2" fill="none" stroke="#f1c055" stroke-width="1.4"/>
<path d="M229.8,226.2 C228.9,223.3 225.8,215.0 224.4,209.2 C223.0,203.4 222.2,197.2 221.1,191.2 C220.1,185.1 218.4,178.5 218.2,172.9 C218.1,167.3 220.0,162.7 220.2,157.5 C220.4,152.3 218.6,147.6 219.5,141.6 C220.4,135.6 224.6,124.7 225.6,121.3" fill="none" stroke="#f1c055" stroke-width="1"/>
<path d="M231.0,225.8 C230.5,223.3 228.9,215.6 228.1,210.9 C227.2,206.1 226.9,201.6 225.9,197.2 C224.9,192.9 222.9,190.1 222.0,184.5 C221.1,179.0 222.2,169.9 220.6,163.9 C218.9,158.0 213.8,154.9 212.2,148.9 C210.6,143.0 211.2,131.5 211.1,128.1" fill="none" stroke="#f1c055" stroke-width="1.4"/>
<path d="M233.0,225.8 C233.3,222.7 234.4,214.0 234.9,207.6 C235.3,201.1 234.9,192.8 235.9,187.0 C236.9,181.2 239.2,177.3 240.7,172.7 C242.2,168.2 243.6,163.9 244.9,159.4 C246.3,154.9 248.1,150.5 248.9,145.7 C249.7,140.9 249.5,133.1 249.7,130.6" fill="none" stroke="#f1c055" stroke-width="1"/>
<path d="M234.4,226.2 C235.4,223.5 238.8,214.6 240.5,209.6 C242.2,204.6 243.6,201.0 244.7,196.3 C245.8,191.6 246.6,187.4 247.0,181.4 C247.4,175.3 245.4,166.4 247.2,160.0 C249.0,153.6 256.7,149.2 257.9,142.9 C259.1,136.7 254.8,126.2 254.1,122.8" fill="none" stroke="#f1c055" stroke-width="1.4"/>
<path d="M236.0,227.3 C237.8,224.9 243.8,216.8 246.9,212.8 C250.1,208.8 252.3,206.7 254.8,203.2 C257.2,199.7 258.3,195.3 261.6,191.8 C264.9,188.2 271.5,186.0 274.7,181.8 C277.8,177.7 277.1,171.1 280.7,166.6 C284.3,162.2 293.7,157.1 296.3,155.3" fill="none" stroke="#f1c055" stroke-width="1"/>
<path d="M236.9,228.3 C239.0,226.8 245.2,221.8 249.4,219.2 C253.5,216.6 256.7,214.8 261.7,212.5 C266.8,210.3 274.4,209.5 279.7,205.9 C285.0,202.3 289.4,195.9 293.4,190.9 C297.4,185.8 298.9,179.5 303.6,175.6 C308.3,171.8 318.8,169.0 321.8,167.7" fill="none" stroke="#f1c055" stroke-width="1.4"/>
<path d="M237.6,229.8 C240.5,228.8 249.6,225.6 255.1,223.5 C260.7,221.4 265.6,219.8 271.1,217.4 C276.5,215.0 282.9,211.8 287.8,209.2 C292.7,206.6 295.9,203.8 300.3,201.9 C304.7,200.0 309.5,201.2 314.3,198.0 C319.0,194.8 326.3,185.2 328.7,182.7" fill="none" stroke="#f1c055" stroke-width="1"/>
<path d="M243.3,232.0 C243.3,233.7 242.4,235.2 241.5,236.7 C240.7,238.2 239.5,239.9 238.4,241.0 C237.2,242.2 236.0,243.3 234.5,243.5 C233.1,243.8 231.3,243.0 229.7,242.5 C228.0,242.1 225.9,242.0 224.7,241.1 C223.4,240.2 222.9,238.7 222.2,237.2 C221.6,235.7 220.5,233.7 220.6,232.0 C220.7,230.3 221.9,228.1 222.8,226.7 C223.6,225.3 224.3,224.6 225.5,223.6 C226.6,222.6 228.1,221.1 229.6,220.7 C231.1,220.3 232.9,220.9 234.5,221.3 C236.1,221.7 237.9,222.1 239.1,223.0 C240.2,223.9 240.7,225.2 241.4,226.7 C242.1,228.2 243.3,230.3 243.3,232.0Z" fill="none" stroke="#f1c055" stroke-width="1.4"/>
<path d="M260.3,232.0 C260.3,236.1 258.8,239.8 257.0,243.7 C255.2,247.7 252.7,252.6 249.6,255.6 C246.4,258.5 242.0,260.9 238.0,261.4 C234.0,262.0 229.6,260.1 225.5,259.2 C221.5,258.2 217.1,258.3 214.0,255.7 C210.8,253.1 207.9,247.3 206.5,243.3 C205.1,239.4 205.5,236.0 205.6,232.0 C205.8,228.0 205.7,222.7 207.3,219.2 C208.8,215.7 211.7,213.5 214.8,211.0 C217.8,208.5 221.6,205.1 225.6,204.2 C229.5,203.3 234.3,204.8 238.4,205.7 C242.5,206.6 247.0,207.4 250.2,209.6 C253.3,211.9 255.7,215.5 257.4,219.2 C259.1,223.0 260.4,227.9 260.3,232.0Z" fill="none" stroke="#f1c055" stroke-width="1.4"/>
<path d="M285.1,232.0 C284.4,239.4 278.0,247.6 274.0,254.4 C270.1,261.3 266.6,268.7 261.6,273.3 C256.5,277.9 250.4,281.1 243.7,282.1 C237.0,283.1 228.6,280.7 221.5,279.3 C214.5,277.9 206.4,277.6 201.2,273.6 C196.0,269.6 193.2,262.3 190.4,255.4 C187.5,248.5 185.4,239.7 184.3,232.0 C183.2,224.3 181.4,216.0 183.9,209.1 C186.3,202.3 192.6,195.2 198.9,190.9 C205.1,186.5 214.2,184.8 221.5,182.9 C228.9,181.1 235.8,178.6 243.0,179.7 C250.2,180.7 258.7,184.2 264.5,189.3 C270.4,194.4 274.7,203.0 278.1,210.1 C281.6,217.2 285.7,224.6 285.1,232.0Z" fill="none" stroke="#f1c055" stroke-width="0.9"/>
<path d="M306.2,232.0 C306.4,243.5 304.0,254.7 299.5,264.9 C294.9,275.1 287.7,285.2 279.0,293.2 C270.4,301.1 258.1,309.5 247.4,312.7 C236.8,316.0 225.7,315.3 215.1,312.5 C204.4,309.7 192.8,303.7 183.5,295.8 C174.1,288.0 163.3,276.1 159.1,265.5 C154.9,254.9 157.7,243.4 158.3,232.0 C158.9,220.6 158.3,208.5 162.7,197.4 C167.0,186.3 175.8,172.0 184.7,165.5 C193.6,159.1 205.3,160.9 216.1,158.6 C226.9,156.2 238.9,148.7 249.3,151.4 C259.7,154.1 270.5,167.4 278.6,174.8 C286.8,182.3 293.6,186.5 298.2,196.0 C302.8,205.6 305.9,220.5 306.2,232.0Z" fill="none" stroke="#f1c055" stroke-width="0.9"/>
<line x1="250.9" y1="290.8" x2="239.4" y2="299.4" stroke="#f4cd6a" stroke-width=".9"/>
<line x1="149.9" y1="232.8" x2="138.6" y2="234.8" stroke="#f4cd6a" stroke-width=".9"/>
<line x1="224.7" y1="186.8" x2="223.3" y2="197.4" stroke="#f4cd6a" stroke-width=".9"/>
<line x1="192.5" y1="327.4" x2="187.6" y2="331.9" stroke="#f4cd6a" stroke-width=".9"/>
<line x1="280.5" y1="164.1" x2="278.3" y2="170.0" stroke="#f4cd6a" stroke-width=".9"/>
<line x1="180.6" y1="180.3" x2="166.9" y2="181.0" stroke="#f4cd6a" stroke-width=".9"/>
<line x1="236.7" y1="277.3" x2="248.2" y2="286.0" stroke="#f4cd6a" stroke-width=".9"/>
<line x1="296.9" y1="197.7" x2="299.7" y2="203.8" stroke="#f4cd6a" stroke-width=".9"/>
<line x1="196.2" y1="261.7" x2="208.0" y2="261.8" stroke="#f4cd6a" stroke-width=".9"/>
<line x1="202.4" y1="200.1" x2="194.2" y2="205.4" stroke="#f4cd6a" stroke-width=".9"/>
<line x1="198.7" y1="236.1" x2="195.3" y2="240.5" stroke="#f4cd6a" stroke-width=".9"/>
<line x1="272.5" y1="312.4" x2="285.3" y2="313.2" stroke="#f4cd6a" stroke-width=".9"/>
<line x1="207.3" y1="256.5" x2="212.7" y2="256.6" stroke="#f4cd6a" stroke-width=".9"/>
<line x1="178.4" y1="293.7" x2="164.3" y2="296.9" stroke="#f4cd6a" stroke-width=".9"/>
<line x1="203.5" y1="209.5" x2="202.6" y2="222.2" stroke="#f4cd6a" stroke-width=".9"/>
<line x1="163.4" y1="292.2" x2="152.4" y2="300.3" stroke="#f4cd6a" stroke-width=".9"/>
<line x1="160.5" y1="206.6" x2="155.7" y2="219.9" stroke="#f4cd6a" stroke-width=".9"/>
<line x1="202.8" y1="329.1" x2="201.6" y2="337.1" stroke="#f4cd6a" stroke-width=".9"/>
<line x1="198.9" y1="172.3" x2="205.1" y2="173.8" stroke="#f4cd6a" stroke-width=".9"/>
<line x1="312.7" y1="247.0" x2="314.9" y2="254.1" stroke="#f4cd6a" stroke-width=".9"/>
<line x1="246.0" y1="308.5" x2="247.3" y2="317.7" stroke="#f4cd6a" stroke-width=".9"/>
<line x1="150.6" y1="238.6" x2="145.1" y2="241.7" stroke="#f4cd6a" stroke-width=".9"/>
<line x1="252.2" y1="300.5" x2="261.0" y2="303.6" stroke="#f4cd6a" stroke-width=".9"/>
<line x1="195.1" y1="230.2" x2="181.6" y2="230.2" stroke="#f4cd6a" stroke-width=".9"/>
<line x1="310.9" y1="230.2" x2="311.4" y2="242.5" stroke="#f4cd6a" stroke-width=".9"/>
<line x1="226.4" y1="196.1" x2="228.4" y2="202.3" stroke="#f4cd6a" stroke-width=".9"/>
<line x1="308.2" y1="266.7" x2="308.2" y2="275.0" stroke="#f4cd6a" stroke-width=".9"/>
<line x1="160.2" y1="192.2" x2="149.6" y2="200.8" stroke="#f4cd6a" stroke-width=".9"/>
<line x1="206.4" y1="300.1" x2="197.3" y2="307.8" stroke="#f4cd6a" stroke-width=".9"/>
<line x1="257.9" y1="294.5" x2="262.9" y2="305.5" stroke="#f4cd6a" stroke-width=".9"/>
<line x1="192.7" y1="237.0" x2="183.8" y2="244.9" stroke="#f4cd6a" stroke-width=".9"/>
<line x1="255.4" y1="256.9" x2="265.9" y2="257.3" stroke="#f4cd6a" stroke-width=".9"/>
<line x1="187.6" y1="276.0" x2="189.1" y2="289.1" stroke="#f4cd6a" stroke-width=".9"/>
<line x1="255.1" y1="302.5" x2="260.3" y2="312.7" stroke="#f4cd6a" stroke-width=".9"/>
<line x1="270.4" y1="308.9" x2="276.5" y2="320.9" stroke="#f4cd6a" stroke-width=".9"/>
<line x1="292.9" y1="279.6" x2="278.4" y2="280.6" stroke="#f4cd6a" stroke-width=".9"/>
<line x1="233.1" y1="246.2" x2="244.7" y2="252.8" stroke="#f4cd6a" stroke-width=".9"/>
<line x1="304.4" y1="235.2" x2="297.5" y2="245.3" stroke="#f4cd6a" stroke-width=".9"/>
<line x1="269.2" y1="171.1" x2="260.8" y2="178.0" stroke="#f4cd6a" stroke-width=".9"/>
<line x1="258.1" y1="223.4" x2="253.3" y2="235.2" stroke="#f4cd6a" stroke-width=".9"/>
<line x1="253.3" y1="286.3" x2="259.8" y2="286.9" stroke="#f4cd6a" stroke-width=".9"/>
<line x1="220.0" y1="271.5" x2="229.1" y2="279.1" stroke="#f4cd6a" stroke-width=".9"/>
<line x1="252.2" y1="143.8" x2="252.9" y2="151.0" stroke="#f4cd6a" stroke-width=".9"/>
<line x1="198.9" y1="173.1" x2="203.3" y2="176.2" stroke="#f4cd6a" stroke-width=".9"/>
<line x1="224.1" y1="214.9" x2="220.4" y2="225.1" stroke="#f4cd6a" stroke-width=".9"/>
<line x1="192.3" y1="221.1" x2="204.8" y2="225.8" stroke="#f4cd6a" stroke-width=".9"/>
<line x1="208.6" y1="142.6" x2="206.5" y2="148.1" stroke="#f4cd6a" stroke-width=".9"/>
<line x1="237.7" y1="206.3" x2="234.0" y2="220.4" stroke="#f4cd6a" stroke-width=".9"/>
<line x1="284.1" y1="223.0" x2="274.6" y2="229.3" stroke="#f4cd6a" stroke-width=".9"/>
<line x1="207.8" y1="164.8" x2="204.6" y2="175.0" stroke="#f4cd6a" stroke-width=".9"/>
<line x1="248.5" y1="208.7" x2="243.7" y2="210.4" stroke="#f4cd6a" stroke-width=".9"/>
<line x1="163.3" y1="253.8" x2="161.1" y2="259.8" stroke="#f4cd6a" stroke-width=".9"/>
<line x1="252.0" y1="322.2" x2="255.6" y2="330.8" stroke="#f4cd6a" stroke-width=".9"/>
<line x1="183.5" y1="196.2" x2="174.7" y2="197.0" stroke="#f4cd6a" stroke-width=".9"/>
<line x1="246.3" y1="189.6" x2="236.3" y2="190.2" stroke="#f4cd6a" stroke-width=".9"/>
<line x1="215.6" y1="202.0" x2="205.7" y2="202.5" stroke="#f4cd6a" stroke-width=".9"/>
<line x1="193.7" y1="235.2" x2="204.1" y2="239.3" stroke="#f4cd6a" stroke-width=".9"/>
<line x1="220.4" y1="196.6" x2="210.1" y2="205.0" stroke="#f4cd6a" stroke-width=".9"/>
<line x1="277.9" y1="186.6" x2="282.3" y2="191.5" stroke="#f4cd6a" stroke-width=".9"/>
<line x1="248.4" y1="234.7" x2="243.5" y2="244.6" stroke="#f4cd6a" stroke-width=".9"/>
<line x1="271.4" y1="159.8" x2="265.5" y2="165.3" stroke="#f4cd6a" stroke-width=".9"/>
<line x1="235.7" y1="205.6" x2="241.8" y2="213.9" stroke="#f4cd6a" stroke-width=".9"/>
<line x1="223.9" y1="210.8" x2="216.3" y2="218.7" stroke="#f4cd6a" stroke-width=".9"/>
<line x1="222.5" y1="327.5" x2="212.6" y2="331.1" stroke="#f4cd6a" stroke-width=".9"/>
<line x1="217.7" y1="255.9" x2="210.8" y2="264.9" stroke="#f4cd6a" stroke-width=".9"/>
<line x1="226.9" y1="326.5" x2="230.1" y2="334.8" stroke="#f4cd6a" stroke-width=".9"/>
<line x1="289.8" y1="176.3" x2="297.8" y2="186.9" stroke="#f4cd6a" stroke-width=".9"/>
<line x1="263.1" y1="225.9" x2="271.1" y2="235.9" stroke="#f4cd6a" stroke-width=".9"/>
<line x1="226.3" y1="250.3" x2="226.4" y2="258.6" stroke="#f4cd6a" stroke-width=".9"/>
<line x1="171.1" y1="258.0" x2="166.4" y2="261.2" stroke="#f4cd6a" stroke-width=".9"/>
<line x1="184.1" y1="307.1" x2="174.9" y2="314.2" stroke="#f4cd6a" stroke-width=".9"/>
<line x1="264.2" y1="145.3" x2="257.9" y2="148.7" stroke="#f4cd6a" stroke-width=".9"/>
<line x1="254.8" y1="335.0" x2="250.8" y2="340.0" stroke="#f4cd6a" stroke-width=".9"/>
<line x1="194.7" y1="327.8" x2="204.6" y2="332.8" stroke="#f4cd6a" stroke-width=".9"/>
<line x1="215.4" y1="168.8" x2="213.3" y2="173.9" stroke="#f4cd6a" stroke-width=".9"/>
<line x1="163.4" y1="214.6" x2="168.8" y2="215.9" stroke="#f4cd6a" stroke-width=".9"/>
<line x1="242.8" y1="290.9" x2="236.9" y2="293.3" stroke="#f4cd6a" stroke-width=".9"/>
<line x1="218.4" y1="201.1" x2="215.3" y2="210.5" stroke="#f4cd6a" stroke-width=".9"/>
<line x1="304.6" y1="213.6" x2="316.3" y2="215.7" stroke="#f4cd6a" stroke-width=".9"/>
<line x1="170.7" y1="267.6" x2="170.4" y2="281.7" stroke="#f4cd6a" stroke-width=".9"/>
<line x1="239.3" y1="265.4" x2="246.5" y2="273.1" stroke="#f4cd6a" stroke-width=".9"/>
<line x1="188.2" y1="292.6" x2="187.9" y2="299.0" stroke="#f4cd6a" stroke-width=".9"/>
<line x1="184.9" y1="213.0" x2="180.3" y2="218.0" stroke="#f4cd6a" stroke-width=".9"/>
<line x1="266.3" y1="272.6" x2="277.5" y2="275.6" stroke="#f4cd6a" stroke-width=".9"/>
<line x1="246.0" y1="185.1" x2="236.9" y2="188.8" stroke="#f4cd6a" stroke-width=".9"/>
<line x1="200.0" y1="302.3" x2="212.2" y2="303.4" stroke="#f4cd6a" stroke-width=".9"/>
<line x1="306.8" y1="278.0" x2="311.6" y2="282.0" stroke="#f4cd6a" stroke-width=".9"/>
<line x1="284.5" y1="164.4" x2="281.2" y2="172.2" stroke="#f4cd6a" stroke-width=".9"/>
<line x1="185.0" y1="205.0" x2="182.0" y2="212.9" stroke="#f4cd6a" stroke-width=".9"/>
<line x1="210.6" y1="163.6" x2="200.7" y2="169.5" stroke="#f4cd6a" stroke-width=".9"/>
<line x1="281.8" y1="226.0" x2="272.7" y2="230.6" stroke="#f4cd6a" stroke-width=".9"/>
<line x1="245.7" y1="255.4" x2="239.6" y2="261.9" stroke="#f4cd6a" stroke-width=".9"/>
<line x1="296.2" y1="236.0" x2="292.5" y2="239.4" stroke="#f4cd6a" stroke-width=".9"/>
<line x1="224.9" y1="321.9" x2="221.5" y2="330.5" stroke="#f4cd6a" stroke-width=".9"/>
<line x1="224.1" y1="155.9" x2="230.0" y2="159.0" stroke="#f4cd6a" stroke-width=".9"/>
<line x1="208.7" y1="216.0" x2="202.6" y2="218.4" stroke="#f4cd6a" stroke-width=".9"/>
<line x1="188.2" y1="193.3" x2="195.1" y2="197.1" stroke="#f4cd6a" stroke-width=".9"/>
<line x1="185.0" y1="236.2" x2="199.2" y2="237.7" stroke="#f4cd6a" stroke-width=".9"/>
<line x1="207.7" y1="332.0" x2="201.2" y2="341.7" stroke="#f4cd6a" stroke-width=".9"/>
<line x1="225.2" y1="333.5" x2="236.1" y2="337.8" stroke="#f4cd6a" stroke-width=".9"/>
<line x1="194.5" y1="276.6" x2="190.1" y2="281.6" stroke="#f4cd6a" stroke-width=".9"/>
<line x1="184.2" y1="151.4" x2="188.7" y2="165.5" stroke="#f4cd6a" stroke-width=".9"/>
<line x1="206.9" y1="200.5" x2="207.7" y2="208.3" stroke="#f4cd6a" stroke-width=".9"/>
<line x1="269.5" y1="285.8" x2="276.0" y2="289.4" stroke="#f4cd6a" stroke-width=".9"/>
<line x1="259.3" y1="332.5" x2="255.2" y2="340.8" stroke="#f4cd6a" stroke-width=".9"/>
<line x1="214.7" y1="144.4" x2="212.5" y2="159.2" stroke="#f4cd6a" stroke-width=".9"/>
<line x1="233.2" y1="208.5" x2="238.7" y2="210.2" stroke="#f4cd6a" stroke-width=".9"/>
<line x1="297.8" y1="238.1" x2="292.4" y2="239.3" stroke="#f4cd6a" stroke-width=".9"/>
<line x1="186.4" y1="145.6" x2="188.2" y2="150.9" stroke="#f4cd6a" stroke-width=".9"/>
<line x1="188.4" y1="220.6" x2="191.6" y2="225.1" stroke="#f4cd6a" stroke-width=".9"/>
<line x1="175.5" y1="241.8" x2="178.6" y2="251.6" stroke="#f4cd6a" stroke-width=".9"/>
<line x1="159.3" y1="200.9" x2="169.2" y2="204.4" stroke="#f4cd6a" stroke-width=".9"/>
<line x1="301.6" y1="260.6" x2="295.2" y2="263.7" stroke="#f4cd6a" stroke-width=".9"/>
<line x1="227.7" y1="255.0" x2="232.0" y2="265.4" stroke="#f4cd6a" stroke-width=".9"/>
<line x1="268.4" y1="326.7" x2="273.8" y2="334.5" stroke="#f4cd6a" stroke-width=".9"/>
<line x1="285.5" y1="182.0" x2="293.1" y2="184.9" stroke="#f4cd6a" stroke-width=".9"/>
<line x1="284.3" y1="200.7" x2="289.6" y2="203.0" stroke="#f4cd6a" stroke-width=".9"/>
<line x1="186.6" y1="152.7" x2="189.0" y2="163.2" stroke="#f4cd6a" stroke-width=".9"/>
<line x1="186.7" y1="147.9" x2="183.5" y2="152.3" stroke="#f4cd6a" stroke-width=".9"/>
<line x1="179.0" y1="195.1" x2="181.3" y2="200.6" stroke="#f4cd6a" stroke-width=".9"/>
<line x1="216.5" y1="200.9" x2="209.0" y2="208.3" stroke="#f4cd6a" stroke-width=".9"/>
<line x1="297.3" y1="272.4" x2="289.5" y2="279.7" stroke="#f4cd6a" stroke-width=".9"/>
<line x1="220.2" y1="306.5" x2="213.3" y2="319.4" stroke="#f4cd6a" stroke-width=".9"/>
<line x1="268.8" y1="282.2" x2="277.5" y2="292.0" stroke="#f4cd6a" stroke-width=".9"/>
<line x1="210.0" y1="162.4" x2="216.6" y2="163.7" stroke="#f4cd6a" stroke-width=".9"/>
<line x1="189.6" y1="276.9" x2="193.2" y2="281.3" stroke="#f4cd6a" stroke-width=".9"/>
<line x1="274.8" y1="252.0" x2="280.3" y2="252.5" stroke="#f4cd6a" stroke-width=".9"/>
<line x1="167.1" y1="210.0" x2="154.0" y2="216.2" stroke="#f4cd6a" stroke-width=".9"/>
<line x1="249.0" y1="183.5" x2="251.0" y2="191.9" stroke="#f4cd6a" stroke-width=".9"/>
<line x1="201.2" y1="137.6" x2="197.7" y2="150.4" stroke="#f4cd6a" stroke-width=".9"/>
<line x1="268.6" y1="155.0" x2="267.9" y2="161.7" stroke="#f4cd6a" stroke-width=".9"/>
<line x1="265.6" y1="228.7" x2="252.9" y2="231.2" stroke="#f4cd6a" stroke-width=".9"/>
<line x1="165.1" y1="201.6" x2="155.8" y2="204.1" stroke="#f4cd6a" stroke-width=".9"/>
<line x1="218.8" y1="227.7" x2="208.1" y2="237.3" stroke="#f4cd6a" stroke-width=".9"/>
<line x1="235.5" y1="338.6" x2="233.7" y2="344.4" stroke="#f4cd6a" stroke-width=".9"/>
<line x1="283.4" y1="223.1" x2="298.0" y2="225.5" stroke="#f4cd6a" stroke-width=".9"/>
<line x1="150.6" y1="256.2" x2="151.4" y2="270.0" stroke="#f4cd6a" stroke-width=".9"/>
<line x1="211.8" y1="180.3" x2="216.3" y2="185.6" stroke="#f4cd6a" stroke-width=".9"/>
<line x1="240.6" y1="210.0" x2="235.4" y2="215.2" stroke="#f4cd6a" stroke-width=".9"/>
<line x1="204.8" y1="187.1" x2="191.4" y2="187.9" stroke="#f4cd6a" stroke-width=".9"/>
<line x1="289.5" y1="264.8" x2="291.4" y2="270.9" stroke="#f4cd6a" stroke-width=".9"/>
<line x1="286.4" y1="237.9" x2="293.0" y2="238.7" stroke="#f4cd6a" stroke-width=".9"/>
<line x1="161.8" y1="285.7" x2="155.1" y2="287.9" stroke="#f4cd6a" stroke-width=".9"/>
<line x1="280.5" y1="203.1" x2="273.1" y2="214.5" stroke="#f4cd6a" stroke-width=".9"/>
<line x1="250.9" y1="303.1" x2="252.9" y2="307.8" stroke="#f4cd6a" stroke-width=".9"/>
<line x1="232.0" y1="258.2" x2="239.4" y2="263.1" stroke="#f4cd6a" stroke-width=".9"/>
<line x1="198.9" y1="140.7" x2="203.8" y2="148.0" stroke="#f4cd6a" stroke-width=".9"/>
<line x1="225.9" y1="282.7" x2="230.6" y2="296.8" stroke="#f4cd6a" stroke-width=".9"/>
<line x1="262.8" y1="275.7" x2="261.3" y2="288.6" stroke="#f4cd6a" stroke-width=".9"/>
<line x1="206.7" y1="259.6" x2="201.2" y2="268.3" stroke="#f4cd6a" stroke-width=".9"/>
<line x1="193.3" y1="151.3" x2="201.5" y2="153.6" stroke="#f4cd6a" stroke-width=".9"/>
<line x1="243.7" y1="294.5" x2="238.6" y2="300.8" stroke="#f4cd6a" stroke-width=".9"/>
<line x1="303.0" y1="192.7" x2="299.4" y2="197.1" stroke="#f4cd6a" stroke-width=".9"/>
<line x1="273.1" y1="275.7" x2="259.2" y2="277.6" stroke="#f4cd6a" stroke-width=".9"/>
<line x1="261.9" y1="311.0" x2="254.3" y2="319.2" stroke="#f4cd6a" stroke-width=".9"/>
<line x1="180.5" y1="243.5" x2="173.5" y2="245.9" stroke="#f4cd6a" stroke-width=".9"/>
<line x1="310.7" y1="249.2" x2="312.3" y2="254.0" stroke="#f4cd6a" stroke-width=".9"/>
<line x1="211.3" y1="172.4" x2="204.9" y2="184.8" stroke="#f4cd6a" stroke-width=".9"/>
<line x1="299.7" y1="263.8" x2="301.9" y2="269.5" stroke="#f4cd6a" stroke-width=".9"/>
<line x1="262.1" y1="251.2" x2="256.6" y2="258.0" stroke="#f4cd6a" stroke-width=".9"/>
<line x1="295.8" y1="179.7" x2="300.2" y2="186.0" stroke="#f4cd6a" stroke-width=".9"/>
<line x1="250.8" y1="323.4" x2="260.6" y2="329.1" stroke="#f4cd6a" stroke-width=".9"/>
<line x1="275.3" y1="182.2" x2="285.8" y2="184.3" stroke="#f4cd6a" stroke-width=".9"/>
<line x1="268.8" y1="222.5" x2="271.2" y2="232.5" stroke="#f4cd6a" stroke-width=".9"/>
<line x1="298.8" y1="198.5" x2="305.8" y2="207.0" stroke="#f4cd6a" stroke-width=".9"/>
<line x1="240.6" y1="261.7" x2="246.4" y2="265.5" stroke="#f4cd6a" stroke-width=".9"/>
<line x1="246.1" y1="270.7" x2="239.2" y2="280.9" stroke="#f4cd6a" stroke-width=".9"/>
<line x1="155.4" y1="236.8" x2="142.8" y2="244.0" stroke="#f4cd6a" stroke-width=".9"/>
<line x1="199.1" y1="313.6" x2="192.9" y2="326.4" stroke="#f4cd6a" stroke-width=".9"/>
<line x1="183.9" y1="281.3" x2="175.4" y2="286.0" stroke="#f4cd6a" stroke-width=".9"/>
<line x1="162.1" y1="175.6" x2="167.4" y2="178.4" stroke="#f4cd6a" stroke-width=".9"/>
<line x1="170.8" y1="264.3" x2="182.7" y2="268.4" stroke="#f4cd6a" stroke-width=".9"/>
<line x1="270.2" y1="306.4" x2="260.3" y2="313.5" stroke="#f4cd6a" stroke-width=".9"/>
<path d="M230.6,183.7 C231.0,185.3 231.6,187.3 233.2,193.5 C234.8,199.6 236.7,213.4 240.3,220.5 C243.9,227.6 252.4,233.2 254.8,235.8" fill="none" stroke="#f8dc8e" stroke-width=".9"/>
<path d="M307.1,20.1 C304.3,21.7 295.4,27.4 290.5,29.5 C285.6,31.6 281.6,31.1 277.8,32.7 C273.9,34.3 269.2,38.1 267.4,39.2" fill="none" stroke="#f8dc8e" stroke-width=".9"/>
<path d="M252.1,454.5 C250.3,452.2 243.7,444.9 241.1,440.7 C238.5,436.5 239.7,434.6 236.7,429.5 C233.6,424.5 225.1,413.7 222.8,410.5" fill="none" stroke="#f8dc8e" stroke-width=".9"/>
<path d="M361.4,207.5 C363.7,208.1 368.4,210.6 375.1,211.3 C381.7,212.0 392.6,213.1 401.3,211.5 C410.0,210.0 423.0,203.6 427.3,202.0" fill="none" stroke="#f8dc8e" stroke-width=".9"/>
<path d="M437.9,27.0 C436.7,28.2 434.7,29.5 430.4,34.3 C426.1,39.0 416.0,48.5 412.1,55.6 C408.2,62.7 407.7,73.3 406.8,76.9" fill="none" stroke="#f8dc8e" stroke-width=".9"/>
<path d="M60.4,284.7 C61.3,283.3 64.7,281.0 65.7,276.1 C66.8,271.2 67.7,260.5 66.9,255.3 C66.2,250.2 62.1,246.9 61.1,245.2" fill="none" stroke="#f8dc8e" stroke-width=".9"/>
<path d="M247.4,453.1 C244.3,455.3 233.6,461.0 228.9,466.4 C224.2,471.9 221.2,478.9 219.3,485.8 C217.5,492.7 218.1,504.2 217.9,507.9" fill="none" stroke="#f8dc8e" stroke-width=".9"/>
<path d="M477.2,26.7 C475.3,25.7 472.5,22.7 465.7,20.7 C458.9,18.8 442.7,17.4 436.4,14.9 C430.0,12.5 429.1,7.5 427.6,6.1" fill="none" stroke="#f8dc8e" stroke-width=".9"/>
<path d="M351.3,467.9 C351.2,469.7 350.4,473.0 350.8,478.7 C351.1,484.4 352.9,493.9 353.4,502.0 C353.8,510.2 353.4,523.3 353.4,527.5" fill="none" stroke="#f8dc8e" stroke-width=".9"/>
<path d="M43.2,170.8 C45.5,168.7 51.6,163.8 57.1,157.8 C62.6,151.8 71.8,140.1 76.2,135.1 C80.6,130.1 82.4,129.0 83.6,127.8" fill="none" stroke="#f8dc8e" stroke-width=".9"/>
<path d="M398.1,161.7 C395.8,163.9 387.8,171.0 384.4,174.8 C381.0,178.5 380.3,181.4 377.8,184.5 C375.3,187.6 370.9,191.8 369.5,193.3" fill="none" stroke="#f8dc8e" stroke-width=".9"/>
<path d="M390.5,12.5 C392.3,9.7 397.5,0.1 401.1,-4.4 C404.7,-8.9 407.4,-11.6 412.0,-14.7 C416.5,-17.8 425.7,-21.7 428.5,-23.1" fill="none" stroke="#f8dc8e" stroke-width=".9"/>
<path d="M115.0,474.3 C111.8,477.5 101.1,487.1 95.6,493.4 C90.0,499.7 85.1,504.6 81.7,512.1 C78.3,519.6 76.2,533.8 75.2,538.2" fill="none" stroke="#f8dc8e" stroke-width=".9"/>
<path d="M128.9,24.8 C133.1,22.3 145.8,12.2 153.6,9.8 C161.4,7.4 170.5,11.4 175.7,10.6 C181.0,9.7 183.7,5.7 185.3,4.7" fill="none" stroke="#f8dc8e" stroke-width=".9"/>
<path d="M103.9,191.3 C103.0,188.6 101.9,180.4 98.7,175.1 C95.4,169.7 88.5,162.8 84.3,159.4 C80.1,156.0 75.3,155.6 73.5,154.9" fill="none" stroke="#f8dc8e" stroke-width=".9"/>
<path d="M276.9,342.4 C280.6,343.8 293.4,347.5 299.5,350.8 C305.5,354.0 310.0,357.9 313.3,361.7 C316.5,365.6 318.0,371.9 318.9,373.9" fill="none" stroke="#f8dc8e" stroke-width=".9"/>
<path d="M356.3,379.7 C357.8,378.3 362.6,376.1 365.0,371.4 C367.4,366.8 370.0,358.6 370.5,351.6 C370.9,344.6 368.2,332.9 367.7,329.2" fill="none" stroke="#f8dc8e" stroke-width=".9"/>
<path d="M42.0,383.8 C43.5,385.5 47.2,389.6 51.3,393.7 C55.4,397.7 62.2,404.5 66.6,408.3 C71.0,412.0 75.7,414.8 77.5,416.2" fill="none" stroke="#f8dc8e" stroke-width=".9"/>
<path d="M240.1,465.6 C238.8,464.4 234.7,464.1 232.3,458.4 C230.0,452.7 227.7,439.2 226.1,431.4 C224.5,423.5 223.1,414.6 222.6,411.2" fill="none" stroke="#f8dc8e" stroke-width=".9"/>
<path d="M267.5,447.5 C270.4,449.4 278.1,455.7 284.9,459.0 C291.6,462.3 302.5,464.7 307.9,467.2 C313.4,469.8 316.2,473.0 317.8,474.1" fill="none" stroke="#f8dc8e" stroke-width=".9"/>
<path d="M348.4,223.1 C346.5,222.9 342.0,222.8 337.4,222.0 C332.7,221.2 325.1,220.3 320.3,218.1 C315.6,215.9 310.9,210.4 309.0,208.9" fill="none" stroke="#f8dc8e" stroke-width=".9"/>
<path d="M409.9,359.0 C409.3,357.3 407.8,354.1 406.4,348.8 C405.0,343.5 402.4,333.7 401.6,327.1 C400.8,320.4 401.5,312.0 401.5,309.0" fill="none" stroke="#f8dc8e" stroke-width=".9"/>
<path d="M34.3,93.0 C32.5,92.5 28.6,90.7 23.5,89.7 C18.5,88.8 9.2,88.0 4.3,87.4 C-0.7,86.7 -4.4,85.9 -6.1,85.6" fill="none" stroke="#f8dc8e" stroke-width=".9"/>
<path d="M386.2,164.2 C384.4,159.7 378.5,146.5 375.4,137.3 C372.2,128.0 367.3,117.8 367.3,108.9 C367.3,99.9 374.1,87.7 375.4,83.5" fill="none" stroke="#f8dc8e" stroke-width=".9"/>
<path d="M52.9,171.6 C52.4,173.8 50.2,180.8 49.9,185.1 C49.6,189.4 48.5,191.2 51.3,197.2 C54.1,203.3 64.3,217.4 66.9,221.4" fill="none" stroke="#f8dc8e" stroke-width=".9"/>
<path d="M486.1,183.2 C485.8,179.8 485.5,169.9 484.2,162.9 C482.9,155.8 480.8,146.7 478.5,140.9 C476.2,135.1 471.8,130.3 470.4,128.2" fill="none" stroke="#f8dc8e" stroke-width=".9"/>
<path d="M257.9,97.1 C256.2,96.8 253.4,94.4 247.6,95.5 C241.7,96.7 228.7,100.6 222.9,103.8 C217.2,107.1 214.7,113.3 213.1,115.2" fill="none" stroke="#f8dc8e" stroke-width=".9"/>
<path d="M424.1,297.8 C425.8,299.7 429.0,305.0 434.3,309.5 C439.5,314.0 450.3,318.1 455.5,324.6 C460.6,331.0 463.5,344.4 465.1,348.4" fill="none" stroke="#f8dc8e" stroke-width=".9"/>
<path d="M449.1,457.9 C453.8,456.6 470.7,453.2 477.3,450.0 C484.0,446.8 485.4,443.9 489.2,438.8 C493.0,433.7 498.2,422.7 500.0,419.5" fill="none" stroke="#f8dc8e" stroke-width=".9"/>
<path d="M244.9,170.7 C245.8,168.5 249.2,163.1 250.7,157.8 C252.2,152.5 252.2,145.4 253.8,138.8 C255.3,132.2 258.9,121.7 259.9,118.3" fill="none" stroke="#f8dc8e" stroke-width=".9"/>
<path d="M219.1,91.7 C217.6,93.3 213.1,98.3 210.0,101.5 C206.8,104.8 205.1,107.6 200.1,111.1 C195.1,114.6 183.3,120.7 180.0,122.6" fill="none" stroke="#f8dc8e" stroke-width=".9"/>
<path d="M68.6,307.7 C66.8,310.9 63.2,320.8 58.2,327.2 C53.1,333.7 43.7,342.1 38.3,346.5 C32.9,350.8 27.8,352.0 25.7,353.1" fill="none" stroke="#f8dc8e" stroke-width=".9"/>
<path d="M269.9,165.0 C273.1,165.6 283.6,166.3 289.0,168.5 C294.4,170.7 298.4,173.7 302.3,178.2 C306.3,182.6 311.1,192.6 312.9,195.5" fill="none" stroke="#f8dc8e" stroke-width=".9"/>
<path d="M49.3,352.7 C48.9,354.6 45.4,357.4 46.4,363.8 C47.5,370.1 52.4,384.8 55.6,390.7 C58.8,396.5 63.9,397.6 65.6,399.0" fill="none" stroke="#f8dc8e" stroke-width=".9"/>
<path d="M81.3,47.3 C84.7,45.4 94.3,40.6 101.4,36.0 C108.4,31.4 118.3,23.5 123.7,19.5 C129.1,15.5 132.3,13.3 134.0,12.0" fill="none" stroke="#f8dc8e" stroke-width=".9"/>
<path d="M343.7,176.6 C344.0,179.6 343.4,188.0 345.3,194.3 C347.3,200.5 353.6,207.2 355.4,214.1 C357.2,220.9 355.9,231.9 356.1,235.5" fill="none" stroke="#f8dc8e" stroke-width=".9"/>
<path d="M4.7,336.6 C9.2,337.1 22.9,337.5 31.9,339.4 C40.9,341.3 52.1,345.1 58.7,348.1 C65.2,351.0 69.2,355.5 71.3,357.0" fill="none" stroke="#f8dc8e" stroke-width=".9"/>
<path d="M71.6,222.1 C69.7,220.1 63.3,214.6 60.1,210.1 C56.9,205.6 54.9,200.8 52.5,195.0 C50.0,189.1 46.6,178.6 45.4,175.3" fill="none" stroke="#f8dc8e" stroke-width=".9"/>
<path d="M462.6,12.9 C462.8,16.8 462.7,30.5 464.1,36.2 C465.5,41.9 466.9,43.1 470.7,47.1 C474.6,51.0 484.3,57.9 487.0,60.1" fill="none" stroke="#f8dc8e" stroke-width=".9"/>
<path d="M449.4,106.6 C449.6,109.6 452.2,117.2 450.7,125.0 C449.3,132.7 445.4,145.9 440.7,153.2 C435.9,160.5 425.2,166.3 422.1,169.0" fill="none" stroke="#f8dc8e" stroke-width=".9"/>
<path d="M247.1,30.0 C247.9,26.8 249.1,18.9 251.8,11.3 C254.4,3.7 259.2,-7.0 263.2,-15.7 C267.3,-24.4 273.9,-36.8 276.0,-41.0" fill="none" stroke="#f8dc8e" stroke-width=".9"/>
<path d="M480.1,41.8 C476.3,43.6 463.4,51.2 457.3,52.7 C451.2,54.3 450.6,52.1 443.6,51.1 C436.7,50.1 420.0,47.5 415.3,46.8" fill="none" stroke="#f8dc8e" stroke-width=".9"/>
<path d="M268.8,329.8 C270.4,328.9 273.2,325.4 278.3,324.0 C283.5,322.6 292.3,323.8 299.8,321.3 C307.3,318.8 319.4,311.0 323.4,308.9" fill="none" stroke="#f8dc8e" stroke-width=".9"/>
<path d="M141.2,63.8 C142.0,66.8 145.3,75.3 145.8,81.4 C146.3,87.5 145.6,95.8 144.3,100.4 C143.0,105.0 139.0,107.7 137.9,109.1" fill="none" stroke="#f8dc8e" stroke-width=".9"/>
<path d="M86.2,70.8 C82.3,70.3 70.4,69.2 63.0,68.3 C55.5,67.4 48.8,68.1 41.6,65.3 C34.3,62.6 23.2,54.1 19.6,51.9" fill="none" stroke="#f8dc8e" stroke-width=".9"/>
<path d="M459.3,74.8 C456.4,75.4 447.6,76.4 441.8,78.5 C435.9,80.6 430.1,82.4 424.2,87.3 C418.3,92.1 409.3,104.1 406.3,107.5" fill="none" stroke="#f8dc8e" stroke-width=".9"/>
<path d="M316.7,46.5 C319.2,46.0 324.2,44.3 331.5,43.5 C338.8,42.7 354.0,42.4 360.4,41.7 C366.9,40.9 368.7,39.5 370.4,39.1" fill="none" stroke="#f8dc8e" stroke-width=".9"/>
<path d="M98.4,28.9 C93.9,29.1 77.5,29.2 71.4,30.1 C65.4,31.0 65.4,32.6 61.9,34.1 C58.5,35.7 52.6,38.6 50.7,39.4" fill="none" stroke="#f8dc8e" stroke-width=".9"/>
<path d="M154.6,110.9 C156.0,115.5 159.8,130.5 162.7,138.5 C165.7,146.5 168.0,151.9 172.5,159.1 C177.0,166.2 186.9,177.7 189.8,181.5" fill="none" stroke="#f8dc8e" stroke-width=".9"/>
<path d="M275.3,14.4 C274.6,12.7 275.5,8.5 271.1,4.3 C266.7,0.1 254.5,-6.0 248.9,-10.7 C243.3,-15.3 239.4,-21.4 237.5,-23.5" fill="none" stroke="#f8dc8e" stroke-width=".9"/>
<path d="M277.7,347.1 C280.7,349.7 292.2,358.6 295.8,363.0 C299.5,367.5 298.0,368.6 299.4,373.6 C300.7,378.7 303.2,390.0 304.0,393.3" fill="none" stroke="#f8dc8e" stroke-width=".9"/>
<path d="M421.4,179.1 C421.2,176.3 420.6,169.7 420.1,162.2 C419.7,154.7 421.7,143.0 418.6,134.4 C415.5,125.7 404.4,114.3 401.6,110.3" fill="none" stroke="#f8dc8e" stroke-width=".9"/>
<path d="M155.9,225.0 C153.9,227.9 147.8,238.0 144.3,242.1 C140.8,246.2 140.8,247.5 134.9,249.7 C129.1,252.0 113.5,254.6 109.2,255.6" fill="none" stroke="#f8dc8e" stroke-width=".9"/>
<path d="M338.8,109.6 C338.8,111.5 340.3,116.4 338.8,120.9 C337.2,125.4 332.9,132.8 329.3,136.4 C325.7,140.1 319.2,141.7 317.2,142.7" fill="none" stroke="#f8dc8e" stroke-width=".9"/>
<path d="M322.7,393.0 C321.5,391.7 319.0,388.7 315.6,385.4 C312.2,382.2 306.1,380.1 302.5,373.4 C298.8,366.8 295.2,350.0 293.8,345.3" fill="none" stroke="#f8dc8e" stroke-width=".9"/>
<path d="M476.5,482.2 C478.8,483.5 486.1,488.7 490.4,489.8 C494.8,490.9 498.4,488.8 502.8,488.6 C507.2,488.4 514.4,488.6 516.8,488.6" fill="none" stroke="#f8dc8e" stroke-width=".9"/>
<path d="M304.1,187.3 C302.6,189.0 299.8,194.6 295.2,197.6 C290.5,200.7 281.5,203.8 276.2,205.6 C271.0,207.3 265.7,207.7 263.6,208.2" fill="none" stroke="#f8dc8e" stroke-width=".9"/>
<path d="M371.0,437.7 C372.3,441.3 376.2,451.8 379.1,459.3 C382.0,466.7 386.4,475.9 388.6,482.4 C390.8,488.9 391.5,495.7 392.1,498.3" fill="none" stroke="#f8dc8e" stroke-width=".9"/>
<path d="M339.2,380.4 C335.4,380.8 322.3,382.4 316.6,383.1 C311.0,383.9 311.1,383.5 305.0,384.9 C298.9,386.2 284.4,390.3 280.3,391.4" fill="none" stroke="#f8dc8e" stroke-width=".9"/>
<path d="M360.5,36.5 C357.1,36.6 346.7,35.4 339.9,37.2 C333.0,39.0 326.1,44.8 319.2,47.2 C312.4,49.6 302.4,50.9 299.0,51.7" fill="none" stroke="#f8dc8e" stroke-width=".9"/>
<path d="M41.9,331.2 C43.6,335.1 49.2,346.3 52.2,354.4 C55.2,362.6 59.1,370.8 60.0,380.3 C60.8,389.7 60.8,405.2 57.4,411.2 C53.9,417.3 44.9,414.7 39.3,416.4 C33.7,418.1 29.4,419.9 23.8,421.6 C18.2,423.3 10.0,426.3 5.7,426.7 C1.4,427.2 -0.7,424.6 -2.0,424.2" fill="none" stroke="#e9b4a8" stroke-width="4.2" stroke-linejoin="round" opacity=".75"/>
<path d="M41.9,331.2 C43.6,335.1 49.2,346.3 52.2,354.4 C55.2,362.6 59.1,370.8 60.0,380.3 C60.8,389.7 60.8,405.2 57.4,411.2 C53.9,417.3 44.9,414.7 39.3,416.4 C33.7,418.1 29.4,419.9 23.8,421.6 C18.2,423.3 10.0,426.3 5.7,426.7 C1.4,427.2 -0.7,424.6 -2.0,424.2" fill="none" stroke="#c99a90" stroke-width=".7" stroke-dasharray="2 1.5" opacity=".8"/>
<path d="M41.9,331.2 C45.8,329.9 56.1,327.8 65.1,323.5 C74.2,319.2 87.1,310.1 96.1,305.4 C105.2,300.7 111.6,302.4 119.4,295.1 C127.1,287.7 137.4,267.9 142.6,261.5 C147.8,255.0 149.0,257.2 150.3,256.3" fill="none" stroke="#e9b4a8" stroke-width="4.2" stroke-linejoin="round" opacity=".75"/>
<path d="M41.9,331.2 C45.8,329.9 56.1,327.8 65.1,323.5 C74.2,319.2 87.1,310.1 96.1,305.4 C105.2,300.7 111.6,302.4 119.4,295.1 C127.1,287.7 137.4,267.9 142.6,261.5 C147.8,255.0 149.0,257.2 150.3,256.3" fill="none" stroke="#c99a90" stroke-width=".7" stroke-dasharray="2 1.5" opacity=".8"/>
<path d="M145.2,426.7 C148.2,424.2 157.7,411.2 163.2,411.2 C168.8,411.2 174.4,423.3 178.7,426.7 C183.0,430.2 184.8,431.9 189.1,431.9 C193.4,431.9 199.8,431.9 204.6,426.7 C209.3,421.6 214.0,408.7 217.5,400.9 C220.9,393.2 222.2,388.0 225.2,380.3 C228.2,372.5 231.4,359.6 235.5,354.4 C239.7,349.3 247.6,350.1 250.0,349.3" fill="none" stroke="#e9b4a8" stroke-width="4.2" stroke-linejoin="round" opacity=".75"/>
<path d="M145.2,426.7 C148.2,424.2 157.7,411.2 163.2,411.2 C168.8,411.2 174.4,423.3 178.7,426.7 C183.0,430.2 184.8,431.9 189.1,431.9 C193.4,431.9 199.8,431.9 204.6,426.7 C209.3,421.6 214.0,408.7 217.5,400.9 C220.9,393.2 222.2,388.0 225.2,380.3 C228.2,372.5 231.4,359.6 235.5,354.4 C239.7,349.3 247.6,350.1 250.0,349.3" fill="none" stroke="#c99a90" stroke-width=".7" stroke-dasharray="2 1.5" opacity=".8"/>
<path d="M145.2,426.7 C146.5,430.2 148.2,441.4 152.9,447.4 C157.7,453.4 169.3,456.9 173.6,462.9 C177.9,468.9 179.6,477.7 178.7,483.5 C177.9,489.4 170.1,495.6 168.4,498.0" fill="none" stroke="#e9b4a8" stroke-width="4.2" stroke-linejoin="round" opacity=".75"/>
<path d="M145.2,426.7 C146.5,430.2 148.2,441.4 152.9,447.4 C157.7,453.4 169.3,456.9 173.6,462.9 C177.9,468.9 179.6,477.7 178.7,483.5 C177.9,489.4 170.1,495.6 168.4,498.0" fill="none" stroke="#c99a90" stroke-width=".7" stroke-dasharray="2 1.5" opacity=".8"/>
<path d="M57.4,60.0 C60.4,60.4 69.0,60.0 75.5,62.5 C81.9,65.1 91.0,71.2 96.1,75.5 C101.3,79.8 105.6,84.9 106.4,88.4 C107.3,91.8 104.7,96.1 101.3,96.1 C97.8,96.1 88.8,86.6 85.8,88.4 C82.8,90.1 86.2,104.3 83.2,106.4 C80.2,108.6 71.2,105.2 67.7,101.3 C64.3,97.4 64.3,90.1 62.5,83.2 C60.8,76.3 58.2,63.8 57.4,60.0" fill="none" stroke="#e9b4a8" stroke-width="4.2" stroke-linejoin="round" opacity=".75"/>
<path d="M57.4,60.0 C60.4,60.4 69.0,60.0 75.5,62.5 C81.9,65.1 91.0,71.2 96.1,75.5 C101.3,79.8 105.6,84.9 106.4,88.4 C107.3,91.8 104.7,96.1 101.3,96.1 C97.8,96.1 88.8,86.6 85.8,88.4 C82.8,90.1 86.2,104.3 83.2,106.4 C80.2,108.6 71.2,105.2 67.7,101.3 C64.3,97.4 64.3,90.1 62.5,83.2 C60.8,76.3 58.2,63.8 57.4,60.0" fill="none" stroke="#c99a90" stroke-width=".7" stroke-dasharray="2 1.5" opacity=".8"/>
<path d="M129.7,106.4 C131.8,109.9 139.1,121.1 142.6,127.1 C146.0,133.1 151.6,137.4 150.3,142.6 C149.0,147.8 137.9,152.1 134.8,158.1 C131.8,164.1 131.0,171.9 132.3,178.7 C133.6,185.6 143.5,191.6 142.6,199.4 C141.7,207.1 130.1,216.8 127.1,225.2 C124.1,233.6 124.9,245.9 124.5,250.0" fill="none" stroke="#e9b4a8" stroke-width="4.2" stroke-linejoin="round" opacity=".75"/>
<path d="M129.7,106.4 C131.8,109.9 139.1,121.1 142.6,127.1 C146.0,133.1 151.6,137.4 150.3,142.6 C149.0,147.8 137.9,152.1 134.8,158.1 C131.8,164.1 131.0,171.9 132.3,178.7 C133.6,185.6 143.5,191.6 142.6,199.4 C141.7,207.1 130.1,216.8 127.1,225.2 C124.1,233.6 124.9,245.9 124.5,250.0" fill="none" stroke="#c99a90" stroke-width=".7" stroke-dasharray="2 1.5" opacity=".8"/>
<path d="M127.1,101.3 C130.5,101.7 142.6,103.9 147.8,103.9 C152.9,103.9 156.4,101.7 158.1,101.3" fill="none" stroke="#e9b4a8" stroke-width="4.2" stroke-linejoin="round" opacity=".75"/>
<path d="M127.1,101.3 C130.5,101.7 142.6,103.9 147.8,103.9 C152.9,103.9 156.4,101.7 158.1,101.3" fill="none" stroke="#c99a90" stroke-width=".7" stroke-dasharray="2 1.5" opacity=".8"/>
<path d="M196.8,109.0 C199.0,108.2 205.8,105.2 209.7,103.9 C213.6,102.6 218.8,100.0 220.1,101.3 C221.3,102.6 220.1,108.6 217.5,111.6 C214.9,114.6 206.7,118.1 204.6,119.4" fill="none" stroke="#e9b4a8" stroke-width="4.2" stroke-linejoin="round" opacity=".75"/>
<path d="M196.8,109.0 C199.0,108.2 205.8,105.2 209.7,103.9 C213.6,102.6 218.8,100.0 220.1,101.3 C221.3,102.6 220.1,108.6 217.5,111.6 C214.9,114.6 206.7,118.1 204.6,119.4" fill="none" stroke="#c99a90" stroke-width=".7" stroke-dasharray="2 1.5" opacity=".8"/>
<path d="M315.1,189.1 C317.7,188.6 326.8,185.6 330.6,186.5 C334.5,187.3 339.2,191.2 338.4,194.2 C337.5,197.2 327.6,202.8 325.5,204.6" fill="none" stroke="#e9b4a8" stroke-width="4.2" stroke-linejoin="round" opacity=".75"/>
<path d="M315.1,189.1 C317.7,188.6 326.8,185.6 330.6,186.5 C334.5,187.3 339.2,191.2 338.4,194.2 C337.5,197.2 327.6,202.8 325.5,204.6" fill="none" stroke="#c99a90" stroke-width=".7" stroke-dasharray="2 1.5" opacity=".8"/>
<path d="M325.5,251.2 C330.6,252.9 350.8,256.3 356.4,261.5 C362.0,266.7 361.6,279.1 359.0,282.1 C356.4,285.2 346.5,278.7 341.0,279.6 C335.4,280.4 328.0,286.0 325.5,287.3" fill="none" stroke="#e9b4a8" stroke-width="4.2" stroke-linejoin="round" opacity=".75"/>
<path d="M325.5,251.2 C330.6,252.9 350.8,256.3 356.4,261.5 C362.0,266.7 361.6,279.1 359.0,282.1 C356.4,285.2 346.5,278.7 341.0,279.6 C335.4,280.4 328.0,286.0 325.5,287.3" fill="none" stroke="#c99a90" stroke-width=".7" stroke-dasharray="2 1.5" opacity=".8"/>
<path d="M-2.0,246.0 C-0.3,247.7 4.0,255.0 8.3,256.3 C12.6,257.6 16.9,255.0 23.8,253.7 C30.7,252.5 45.3,249.4 49.6,248.6" fill="none" stroke="#e9b4a8" stroke-width="4.2" stroke-linejoin="round" opacity=".75"/>
<path d="M-2.0,246.0 C-0.3,247.7 4.0,255.0 8.3,256.3 C12.6,257.6 16.9,255.0 23.8,253.7 C30.7,252.5 45.3,249.4 49.6,248.6" fill="none" stroke="#c99a90" stroke-width=".7" stroke-dasharray="2 1.5" opacity=".8"/>
<path d="M-2.0,225.2 C-0.3,226.1 5.7,226.2 8.3,230.4 C10.9,234.5 12.6,246.7 13.5,250.0" fill="none" stroke="#e9b4a8" stroke-width="4.2" stroke-linejoin="round" opacity=".75"/>
<path d="M-2.0,225.2 C-0.3,226.1 5.7,226.2 8.3,230.4 C10.9,234.5 12.6,246.7 13.5,250.0" fill="none" stroke="#c99a90" stroke-width=".7" stroke-dasharray="2 1.5" opacity=".8"/>
<path d="M29.0,240.7 C31.6,240.3 40.2,236.6 44.5,238.1 C48.8,239.7 53.1,248.0 54.8,250.0" fill="none" stroke="#e9b4a8" stroke-width="4.2" stroke-linejoin="round" opacity=".75"/>
<path d="M29.0,240.7 C31.6,240.3 40.2,236.6 44.5,238.1 C48.8,239.7 53.1,248.0 54.8,250.0" fill="none" stroke="#c99a90" stroke-width=".7" stroke-dasharray="2 1.5" opacity=".8"/>
<path d="M109.0,0.6 C109.5,5.3 107.7,21.7 111.6,29.0 C115.5,36.3 125.4,43.2 132.3,44.5 C139.1,45.8 147.8,35.9 152.9,36.7 C158.1,37.6 158.9,44.9 163.2,49.6 C167.5,54.4 173.6,63.8 178.7,65.1 C183.9,66.4 191.6,58.7 194.2,57.4" fill="none" stroke="#8d8d8d" stroke-width=".8" stroke-dasharray="3 2"/>
<path d="M29.0,75.5 C31.6,80.6 39.7,97.0 44.5,106.4 C49.2,115.9 53.1,124.5 57.4,132.3 C61.7,140.0 69.0,144.3 70.3,152.9 C71.6,161.5 64.3,172.7 65.1,183.9 C66.0,195.1 74.6,209.0 75.5,220.1 C76.3,231.1 71.2,245.0 70.3,250.0" fill="none" stroke="#8d8d8d" stroke-width=".8" stroke-dasharray="3 2"/>
<path d="M106.4,127.1 C108.6,129.7 118.5,136.6 119.4,142.6 C120.2,148.6 111.6,156.4 111.6,163.2 C111.6,170.1 118.1,180.5 119.4,183.9" fill="none" stroke="#8d8d8d" stroke-width=".8" stroke-dasharray="3 2"/>
<path d="M289.3,75.5 C291.0,80.6 295.3,102.1 299.6,106.4 C303.9,110.7 309.5,103.9 315.1,101.3 C320.7,98.7 326.3,94.0 333.2,91.0 C340.1,87.9 350.0,85.8 356.4,83.2 C362.9,80.6 365.9,74.6 371.9,75.5 C378.0,76.3 386.6,88.4 392.6,88.4 C398.6,88.4 402.1,81.9 408.1,75.5 C414.1,69.0 425.3,53.9 428.7,49.6" fill="none" stroke="#8d8d8d" stroke-width=".8" stroke-dasharray="3 2"/>
<path d="M392.6,127.1 C394.3,129.7 400.3,137.4 402.9,142.6 C405.5,147.8 403.8,154.6 408.1,158.1 C412.4,161.5 421.9,163.2 428.7,163.2 C435.6,163.2 443.8,157.2 449.4,158.1 C455.0,158.9 459.7,172.7 462.3,168.4 C464.9,164.1 464.5,138.3 464.9,132.3" fill="none" stroke="#8d8d8d" stroke-width=".8" stroke-dasharray="3 2"/>
<path d="M70.3,380.3 C71.2,382.0 76.3,385.4 75.5,390.6 C74.6,395.8 68.1,405.2 65.1,411.2 C62.1,417.3 57.4,420.7 57.4,426.7 C57.4,432.8 65.6,440.5 65.1,447.4 C64.7,454.3 56.5,464.6 54.8,468.1" fill="none" stroke="#8d8d8d" stroke-width=".8" stroke-dasharray="3 2"/>
<path d="M377.1,261.5 C379.7,264.9 389.1,274.4 392.6,282.1 C396.0,289.9 394.3,307.1 397.8,308.0 C401.2,308.8 406.4,292.5 413.2,287.3 C420.1,282.1 427.9,277.8 439.1,277.0 C450.3,276.1 470.2,282.1 480.4,282.1 C490.5,282.1 496.7,277.8 500.0,277.0" fill="none" stroke="#8d8d8d" stroke-width=".8" stroke-dasharray="3 2"/>
<path d="M330.6,390.6 C333.2,392.3 342.7,395.8 346.1,400.9 C349.6,406.1 349.6,414.7 351.3,421.6 C353.0,428.5 357.3,434.5 356.4,442.2 C355.6,450.0 347.0,458.8 346.1,468.1 C345.3,477.3 350.4,493.0 351.3,498.0" fill="none" stroke="#8d8d8d" stroke-width=".8" stroke-dasharray="3 2"/>
<path d="M382.3,349.3 C384.0,352.3 385.7,363.0 392.6,367.4 C399.5,371.7 415.0,375.5 423.6,375.1 C432.2,374.7 436.5,362.2 444.2,364.8 C452.0,367.4 465.7,386.3 470.1,390.6" fill="none" stroke="#8d8d8d" stroke-width=".8" stroke-dasharray="3 2"/>
<path d="M0.6,54.8 C2.7,59.1 9.6,72.0 13.5,80.6 C17.4,89.2 22.1,102.1 23.8,106.4" fill="none" stroke="#8d8d8d" stroke-width=".8" stroke-dasharray="3 2"/>
<path d="M13.5,375.1 C16.9,372.5 29.8,364.8 34.1,359.6 C38.5,354.4 41.0,348.4 39.3,344.1 C37.6,339.8 26.4,335.5 23.8,333.8" fill="none" stroke="#8d8d8d" stroke-width=".8" stroke-dasharray="3 2"/>
<path d="M0.6,142.6 C6.6,144.3 24.3,149.0 36.7,152.9 C49.2,156.8 63.8,161.5 75.5,165.8 C87.1,170.1 97.0,174.0 106.4,178.7 C115.9,183.5 125.4,189.9 132.3,194.2 C139.1,198.5 145.2,202.8 147.8,204.6" fill="none" stroke="#f5d273" stroke-width="1.2"/>
<path d="M0.6,98.7 C4.5,98.3 13.5,98.3 23.8,96.1 C34.1,94.0 56.1,87.5 62.5,85.8" fill="none" stroke="#f5d273" stroke-width="1.2"/>
<path d="M88.4,0.6 C91.4,6.6 99.1,28.6 106.4,36.7 C113.8,44.9 122.8,44.9 132.3,49.6 C141.7,54.4 155.5,59.5 163.2,65.1 C171.0,70.7 176.2,80.2 178.7,83.2" fill="none" stroke="#f5d273" stroke-width="1.2"/>
<path d="M132.3,0.6 C135.7,6.6 148.6,23.4 152.9,36.7 C157.2,50.1 154.6,69.0 158.1,80.6 C161.5,92.2 171.0,102.1 173.6,106.4" fill="none" stroke="#f5d273" stroke-width="1.2"/>
<path d="M-2.0,473.2 C4.5,472.4 23.8,471.5 36.7,468.1 C49.6,464.6 64.7,458.2 75.5,452.6 C86.2,447.0 97.0,437.5 101.3,434.5" fill="none" stroke="#f5d273" stroke-width="1.2"/>
<path d="M75.5,493.9 C76.8,489.6 79.8,476.7 83.2,468.1 C86.6,459.4 94.0,446.5 96.1,442.2" fill="none" stroke="#f5d273" stroke-width="1.2"/>
<path d="M13.5,261.5 C19.5,261.1 39.3,256.3 49.6,258.9 C60.0,261.5 64.7,274.0 75.5,277.0 C86.2,280.0 107.7,277.0 114.2,277.0" fill="none" stroke="#f5d273" stroke-width="1.2"/>
<path d="M310.0,18.7 C309.5,23.8 310.0,40.2 307.4,49.6 C304.8,59.1 296.6,66.0 294.5,75.5 C292.3,84.9 294.5,101.3 294.5,106.4" fill="none" stroke="#f5d273" stroke-width="1.2"/>
<path d="M392.6,-2.0 C391.7,3.2 390.9,18.7 387.4,29.0 C384.0,39.3 377.1,47.9 371.9,60.0 C366.8,72.0 357.3,90.1 356.4,101.3 C355.6,112.5 365.0,122.8 366.8,127.1" fill="none" stroke="#f5d273" stroke-width="1.2"/>
<path d="M333.2,119.4 C339.2,121.5 359.5,128.4 369.4,132.3 C379.3,136.1 382.7,145.6 392.6,142.6 C402.5,139.6 415.8,121.9 428.7,114.2 C441.6,106.4 458.2,101.7 470.1,96.1 C481.9,90.5 495.0,83.2 500.0,80.6" fill="none" stroke="#f5d273" stroke-width="1.2"/>
<path d="M402.9,142.6 C405.5,146.9 413.2,158.1 418.4,168.4 C423.6,178.7 427.9,194.2 433.9,204.6 C439.9,214.9 446.8,222.8 454.6,230.4 C462.3,238.0 476.1,246.7 480.4,250.0" fill="none" stroke="#f5d273" stroke-width="1.2"/>
<path d="M377.1,256.3 C381.4,258.9 394.3,265.8 402.9,271.8 C411.5,277.8 415.8,288.2 428.7,292.5 C441.6,296.8 468.5,297.6 480.4,297.6 C492.3,297.6 496.7,293.3 500.0,292.5" fill="none" stroke="#f5d273" stroke-width="1.2"/>
<path d="M377.1,302.8 C383.6,304.5 402.9,311.8 415.8,313.1 C428.7,314.4 443.8,308.8 454.6,310.5 C465.3,312.3 476.1,321.3 480.4,323.5" fill="none" stroke="#f5d273" stroke-width="1.2"/>
<path d="M402.9,354.4 C407.2,357.0 418.0,365.6 428.7,369.9 C439.5,374.2 455.6,376.8 467.5,380.3 C479.3,383.7 494.6,388.9 500.0,390.6" fill="none" stroke="#f5d273" stroke-width="1.2"/>
<path d="M325.5,493.9 C329.8,490.4 340.1,478.4 351.3,473.2 C362.5,468.1 377.5,464.2 392.6,462.9 C407.7,461.6 423.7,462.0 441.6,465.5 C459.6,468.9 490.3,480.5 500.0,483.5" fill="none" stroke="#f5d273" stroke-width="1.2"/>
<path d="M250.6,375.1 C253.6,379.4 264.8,392.3 268.7,400.9 C272.5,409.5 273.8,414.7 273.8,426.7 C273.8,438.8 269.5,465.5 268.7,473.2" fill="none" stroke="#f5d273" stroke-width="1.2"/>
<path d="M467.5,344.1 C468.8,350.1 473.1,369.1 475.2,380.3 C477.4,391.5 476.2,400.9 480.4,411.2 C484.5,421.6 496.7,437.1 500.0,442.2" fill="none" stroke="#f5d273" stroke-width="1.2"/>
<path d="M377.1,142.6 C378.0,148.6 378.0,167.5 382.3,178.7 C386.6,189.9 397.8,197.8 402.9,209.7 C408.1,221.6 411.5,243.3 413.2,250.0" fill="none" stroke="#f5d273" stroke-width="1.2"/>
<path d="M53.5,0.6 C58.5,3.4 74.4,9.6 83.2,17.4 C92.0,25.1 100.4,36.1 106.4,47.1 C112.5,58.0 113.3,73.7 119.4,83.2 C125.4,92.7 136.1,98.3 142.6,103.9 C149.0,109.5 150.3,110.3 158.1,116.8 C165.8,123.2 183.9,138.3 189.1,142.6" fill="none" stroke="#efb43e" stroke-width="1.8" stroke-linecap="round"/>
<path d="M98.7,0.6 C96.1,3.2 89.7,11.3 83.2,16.1 C76.8,20.8 68.1,23.4 60.0,29.0 C51.8,34.6 41.2,44.5 34.1,49.6 C27.0,54.8 20.8,55.2 17.4,60.0 C13.9,64.7 16.3,71.2 13.5,78.0 C10.7,84.9 2.7,97.4 0.6,101.3" fill="none" stroke="#efb43e" stroke-width="1.8" stroke-linecap="round"/>
<path d="M44.5,0.6 C47.1,4.9 56.1,18.2 60.0,26.4 C63.8,34.6 65.6,44.5 67.7,49.6 C69.9,54.8 67.3,53.9 72.9,57.4 C78.5,60.8 93.5,66.0 101.3,70.3 C109.0,74.6 116.3,81.1 119.4,83.2" fill="none" stroke="#efb43e" stroke-width="1.8" stroke-linecap="round"/>
<path d="M0.6,189.1 C5.3,189.9 20.8,191.2 29.0,194.2 C37.2,197.2 40.2,203.3 49.6,207.1 C59.1,211.0 75.0,218.8 85.8,217.5 C96.5,216.2 106.0,202.0 114.2,199.4 C122.4,196.8 129.7,200.3 134.8,202.0 C140.0,203.7 143.5,208.4 145.2,209.7" fill="none" stroke="#efb43e" stroke-width="1.8" stroke-linecap="round"/>
<path d="M183.9,0.6 C186.1,1.4 193.8,-0.3 196.8,5.7 C199.8,11.8 201.5,25.1 202.0,36.7 C202.4,48.3 199.0,64.7 199.4,75.5 C199.8,86.2 202.8,91.8 204.6,101.3 C206.3,110.7 208.9,127.1 209.7,132.3" fill="none" stroke="#efb43e" stroke-width="1.8" stroke-linecap="round"/>
<path d="M150.3,98.7 C153.3,98.5 163.7,95.7 168.4,97.4 C173.1,99.1 176.2,103.2 178.7,109.0 C181.3,114.8 183.0,128.4 183.9,132.3" fill="none" stroke="#efb43e" stroke-width="1.8" stroke-linecap="round"/>
<path d="M273.8,142.6 C279.0,136.6 296.6,116.8 304.8,106.4 C313.0,96.1 317.3,94.4 322.9,80.6 C328.5,66.9 332.8,37.2 338.4,23.8 C344.0,10.5 353.4,4.5 356.4,0.6" fill="none" stroke="#efb43e" stroke-width="1.8" stroke-linecap="round"/>
<path d="M356.4,0.6 C360.7,3.6 368.5,11.3 382.3,18.7 C396.0,26.0 421.9,34.1 439.1,44.5 C456.3,54.8 475.4,72.9 485.5,80.6 C495.7,88.4 497.6,89.2 500.0,91.0" fill="none" stroke="#efb43e" stroke-width="1.8" stroke-linecap="round"/>
<path d="M392.6,199.4 C400.8,197.2 423.7,189.9 441.6,186.5 C459.6,183.0 490.3,180.0 500.0,178.7" fill="none" stroke="#efb43e" stroke-width="1.8" stroke-linecap="round"/>
<path d="M315.1,214.9 C321.2,213.2 338.4,207.1 351.3,204.6 C364.2,202.0 385.7,200.3 392.6,199.4" fill="none" stroke="#efb43e" stroke-width="1.8" stroke-linecap="round"/>
<path d="M0.6,328.6 C6.6,327.3 24.7,323.5 36.7,320.9 C48.8,318.3 60.8,317.0 72.9,313.1 C84.9,309.3 96.5,306.2 109.0,297.6 C121.5,289.0 138.7,268.4 147.8,261.5 C156.8,254.6 160.7,257.2 163.2,256.3" fill="none" stroke="#efb43e" stroke-width="1.8" stroke-linecap="round"/>
<path d="M5.7,382.8 C15.2,378.5 43.2,365.6 62.5,357.0 C81.9,348.4 103.0,339.8 121.9,331.2 C140.9,322.6 164.1,311.8 176.2,305.4 C188.2,298.9 191.2,294.6 194.2,292.5" fill="none" stroke="#efb43e" stroke-width="1.8" stroke-linecap="round"/>
<path d="M75.5,493.9 C81.9,481.8 103.0,439.6 114.2,421.6 C125.4,403.5 131.8,400.5 142.6,385.4 C153.3,370.4 170.6,343.7 178.7,331.2 C186.9,318.7 189.5,314.0 191.6,310.5" fill="none" stroke="#efb43e" stroke-width="1.8" stroke-linecap="round"/>
<path d="M5.7,385.4 C13.1,392.3 34.6,414.3 49.6,426.7 C64.7,439.2 80.6,453.4 96.1,460.3 C111.6,467.2 131.0,463.7 142.6,468.1 C154.2,472.4 162.0,483.1 165.8,486.1" fill="none" stroke="#efb43e" stroke-width="1.8" stroke-linecap="round"/>
<path d="M226.5,346.7 C227.2,355.7 229.3,383.3 230.4,400.9 C231.5,418.6 233.8,437.1 233.0,452.6 C232.1,468.1 226.5,487.0 225.2,493.9" fill="none" stroke="#efb43e" stroke-width="1.8" stroke-linecap="round"/>
<path d="M273.8,341.5 C276.0,345.8 281.6,360.5 286.7,367.4 C291.9,374.2 298.8,372.1 304.8,382.8 C310.8,393.6 318.1,421.1 322.9,431.9 C327.6,442.7 331.5,444.8 333.2,447.4" fill="none" stroke="#efb43e" stroke-width="1.8" stroke-linecap="round"/>
<path d="M311.3,292.5 C318.8,297.6 342.9,313.1 356.4,323.5 C370.0,333.8 380.5,341.5 392.6,354.4 C404.6,367.4 420.1,388.0 428.7,400.9 C437.3,413.8 439.9,423.3 444.2,431.9 C448.5,440.5 452.8,449.1 454.6,452.6" fill="none" stroke="#efb43e" stroke-width="1.8" stroke-linecap="round"/>
<path d="M493.3,413.8 C492.0,420.3 488.6,439.2 485.5,452.6 C482.5,465.9 476.9,487.0 475.2,493.9" fill="none" stroke="#efb43e" stroke-width="1.8" stroke-linecap="round"/>
<path d="M289.3,498.0 C290.6,491.3 296.2,467.0 297.1,457.7 C297.9,448.4 297.5,450.0 294.5,442.2 C291.5,434.5 284.1,421.1 279.0,411.2 C273.8,401.3 267.4,390.2 263.5,382.8 C259.6,375.5 257.0,369.9 255.7,367.4" fill="none" stroke="#efb43e" stroke-width="1.8" stroke-linecap="round"/>
<path d="M0.6,297.6 C1.9,299.8 6.6,305.4 8.3,310.5 C10.0,315.7 10.9,321.3 10.9,328.6 C10.9,335.9 9.2,345.0 8.3,354.4 C7.5,363.9 6.2,380.3 5.7,385.4" fill="none" stroke="#efb43e" stroke-width="1.8" stroke-linecap="round"/>
<path d="M248.0,367.4 L263.5,380.3" fill="none" stroke="#efb43e" stroke-width="1.8" stroke-linecap="round"/>
<path d="M152.9,75.5 C156.4,76.3 168.4,77.2 173.6,80.6 C178.7,84.1 182.2,93.5 183.9,96.1" fill="none" stroke="#efb43e" stroke-width="1.8" stroke-linecap="round"/>
<path d="M153.0,158.0 C160.9,150.2 183.3,136.7 194.0,132.0 C204.7,127.3 207.7,128.8 217.0,130.0 C226.3,131.2 241.4,136.7 250.0,139.0 C258.6,141.3 258.7,137.0 268.7,144.0 C278.7,151.0 302.3,172.7 310.0,181.0 C317.7,189.3 314.2,185.8 315.0,194.0 C315.8,202.2 315.0,220.7 315.0,230.0 C315.0,239.3 315.2,239.6 315.0,250.0 C314.8,260.4 316.4,281.1 313.8,292.5 C311.2,303.9 306.3,310.5 299.6,318.3 C292.9,326.0 281.6,334.1 273.8,339.0 C266.0,343.9 260.9,346.7 253.0,348.0 C245.1,349.3 236.7,349.1 226.5,346.7 C216.3,344.3 200.0,339.4 191.6,333.8 C183.2,328.2 181.6,321.2 176.0,313.0 C170.4,304.8 163.2,294.2 158.0,284.7 C152.8,275.2 147.6,265.1 145.0,256.0 C142.4,246.9 142.6,238.6 142.6,230.0 C142.6,221.4 144.3,213.2 145.0,204.6 C145.7,196.1 145.2,186.5 146.5,178.7 C147.8,170.9 145.1,165.8 153.0,158.0Z" fill="none" stroke="#e99e3c" stroke-width="2.6"/>
</g>
<rect x="124.5" y="122.5" width="250.0" height="249.0" fill="none" stroke="#f04b4b" stroke-opacity=".8" stroke-width="3"/>
<text x="3.0" y="27.5" style="font-family:Liberation Sans,sans-serif;font-size:11.7px;font-weight:normal;letter-spacing:0px" fill="none" stroke="#fff" stroke-opacity=".85" stroke-width="2.6" stroke-linejoin="round">Поварово</text><text x="3.0" y="27.5" style="font-family:Liberation Sans,sans-serif;font-size:11.7px;font-weight:normal;letter-spacing:0px" fill="#555">Поварово</text>
<text x="187.0" y="32.0" style="font-family:Liberation Sans,sans-serif;font-size:11.7px;font-weight:normal;letter-spacing:0px" fill="none" stroke="#fff" stroke-opacity=".85" stroke-width="2.6" stroke-linejoin="round">Марфино</text><text x="187.0" y="32.0" style="font-family:Liberation Sans,sans-serif;font-size:11.7px;font-weight:normal;letter-spacing:0px" fill="#555">Марфино</text>
<text x="283.0" y="35.0" style="font-family:Liberation Sans,sans-serif;font-size:11.7px;font-weight:normal;letter-spacing:0px" fill="none" stroke="#fff" stroke-opacity=".85" stroke-width="2.6" stroke-linejoin="round">Правдинский</text><text x="283.0" y="35.0" style="font-family:Liberation Sans,sans-serif;font-size:11.7px;font-weight:normal;letter-spacing:0px" fill="#555">Правдинский</text>
<text x="160.0" y="70.0" style="font-family:Liberation Sans,sans-serif;font-size:11.7px;font-weight:normal;letter-spacing:0px" fill="none" stroke="#fff" stroke-opacity=".85" stroke-width="2.6" stroke-linejoin="round">Лобня</text><text x="160.0" y="70.0" style="font-family:Liberation Sans,sans-serif;font-size:11.7px;font-weight:normal;letter-spacing:0px" fill="#555">Лобня</text>
<text x="422.0" y="178.5" style="font-family:Liberation Sans,sans-serif;font-size:11.7px;font-weight:normal;letter-spacing:0px" fill="none" stroke="#fff" stroke-opacity=".85" stroke-width="2.6" stroke-linejoin="round">Монино</text><text x="422.0" y="178.5" style="font-family:Liberation Sans,sans-serif;font-size:11.7px;font-weight:normal;letter-spacing:0px" fill="#555">Монино</text>
<text x="418.0" y="259.0" style="font-family:Liberation Sans,sans-serif;font-size:11.7px;font-weight:normal;letter-spacing:0px" fill="none" stroke="#fff" stroke-opacity=".85" stroke-width="2.6" stroke-linejoin="round">Электроугли</text><text x="418.0" y="259.0" style="font-family:Liberation Sans,sans-serif;font-size:11.7px;font-weight:normal;letter-spacing:0px" fill="#555">Электроугли</text>
<text x="95.0" y="328.0" style="font-family:Liberation Sans,sans-serif;font-size:11.7px;font-weight:normal;letter-spacing:0px" fill="none" stroke="#fff" stroke-opacity=".85" stroke-width="2.6" stroke-linejoin="round">Внуково</text><text x="95.0" y="328.0" style="font-family:Liberation Sans,sans-serif;font-size:11.7px;font-weight:normal;letter-spacing:0px" fill="#555">Внуково</text>
<text x="280.0" y="316.0" style="font-family:Liberation Sans,sans-serif;font-size:11.7px;font-weight:normal;letter-spacing:0px" fill="none" stroke="#fff" stroke-opacity=".85" stroke-width="2.6" stroke-linejoin="round">Дзержинский</text><text x="280.0" y="316.0" style="font-family:Liberation Sans,sans-serif;font-size:11.7px;font-weight:normal;letter-spacing:0px" fill="#555">Дзержинский</text>
<text x="5.0" y="370.0" style="font-family:Liberation Sans,sans-serif;font-size:11.7px;font-weight:normal;letter-spacing:0px" fill="none" stroke="#fff" stroke-opacity=".85" stroke-width="2.6" stroke-linejoin="round">Апрелевка</text><text x="5.0" y="370.0" style="font-family:Liberation Sans,sans-serif;font-size:11.7px;font-weight:normal;letter-spacing:0px" fill="#555">Апрелевка</text>
<text x="247.0" y="363.0" style="font-family:Liberation Sans,sans-serif;font-size:11.7px;font-weight:normal;letter-spacing:0px" fill="none" stroke="#fff" stroke-opacity=".85" stroke-width="2.6" stroke-linejoin="round">Видное</text><text x="247.0" y="363.0" style="font-family:Liberation Sans,sans-serif;font-size:11.7px;font-weight:normal;letter-spacing:0px" fill="#555">Видное</text>
<text x="187.0" y="396.0" style="font-family:Liberation Sans,sans-serif;font-size:11.7px;font-weight:normal;letter-spacing:0px" fill="none" stroke="#fff" stroke-opacity=".85" stroke-width="2.6" stroke-linejoin="round">Щербинка</text><text x="187.0" y="396.0" style="font-family:Liberation Sans,sans-serif;font-size:11.7px;font-weight:normal;letter-spacing:0px" fill="#555">Щербинка</text>
<text x="52.0" y="447.0" style="font-family:Liberation Sans,sans-serif;font-size:11.7px;font-weight:normal;letter-spacing:0px" fill="none" stroke="#fff" stroke-opacity=".85" stroke-width="2.6" stroke-linejoin="round">Шишкин</text><text x="52.0" y="447.0" style="font-family:Liberation Sans,sans-serif;font-size:11.7px;font-weight:normal;letter-spacing:0px" fill="#555">Шишкин</text>
<text x="68.0" y="464.0" style="font-family:Liberation Sans,sans-serif;font-size:11.7px;font-weight:normal;letter-spacing:0px" fill="none" stroke="#fff" stroke-opacity=".85" stroke-width="2.6" stroke-linejoin="round">Лес</text><text x="68.0" y="464.0" style="font-family:Liberation Sans,sans-serif;font-size:11.7px;font-weight:normal;letter-spacing:0px" fill="#555">Лес</text>
<text x="438.0" y="450.0" style="font-family:Liberation Sans,sans-serif;font-size:11.7px;font-weight:normal;letter-spacing:0px" fill="none" stroke="#fff" stroke-opacity=".85" stroke-width="2.6" stroke-linejoin="round">Бронницы</text><text x="438.0" y="450.0" style="font-family:Liberation Sans,sans-serif;font-size:11.7px;font-weight:normal;letter-spacing:0px" fill="#555">Бронницы</text>
<text x="474.0" y="73.0" style="font-family:Liberation Sans,sans-serif;font-size:11.7px;font-weight:normal;letter-spacing:0px" fill="none" stroke="#fff" stroke-opacity=".85" stroke-width="2.6" stroke-linejoin="round">Черн</text><text x="474.0" y="73.0" style="font-family:Liberation Sans,sans-serif;font-size:11.7px;font-weight:normal;letter-spacing:0px" fill="#555">Черн</text>
<text x="0.0" y="326.0" style="font-family:Liberation Sans,sans-serif;font-size:11.7px;font-weight:normal;letter-spacing:0px" fill="none" stroke="#fff" stroke-opacity=".85" stroke-width="2.6" stroke-linejoin="round">цыно</text><text x="0.0" y="326.0" style="font-family:Liberation Sans,sans-serif;font-size:11.7px;font-weight:normal;letter-spacing:0px" fill="#555">цыно</text>
<text x="42.0" y="80.0" style="font-family:Liberation Sans,sans-serif;font-size:14.6px;font-weight:normal;letter-spacing:0px" fill="none" stroke="#fff" stroke-opacity=".85" stroke-width="2.6" stroke-linejoin="round">Зеленоград</text><text x="42.0" y="80.0" style="font-family:Liberation Sans,sans-serif;font-size:14.6px;font-weight:normal;letter-spacing:0px" fill="#333">Зеленоград</text>
<text x="286.0" y="71.0" style="font-family:Liberation Sans,sans-serif;font-size:14.6px;font-weight:normal;letter-spacing:0px" fill="none" stroke="#fff" stroke-opacity=".85" stroke-width="2.6" stroke-linejoin="round">Пушкино</text><text x="286.0" y="71.0" style="font-family:Liberation Sans,sans-serif;font-size:14.6px;font-weight:normal;letter-spacing:0px" fill="#333">Пушкино</text>
<text x="147.0" y="121.0" style="font-family:Liberation Sans,sans-serif;font-size:14.6px;font-weight:normal;letter-spacing:0px" fill="none" stroke="#fff" stroke-opacity=".85" stroke-width="2.6" stroke-linejoin="round">Долгопрудный</text><text x="147.0" y="121.0" style="font-family:Liberation Sans,sans-serif;font-size:14.6px;font-weight:normal;letter-spacing:0px" fill="#333">Долгопрудный</text>
<text x="246.0" y="136.0" style="font-family:Liberation Sans,sans-serif;font-size:14.6px;font-weight:normal;letter-spacing:0px" fill="none" stroke="#fff" stroke-opacity=".85" stroke-width="2.6" stroke-linejoin="round">Мытищи</text><text x="246.0" y="136.0" style="font-family:Liberation Sans,sans-serif;font-size:14.6px;font-weight:normal;letter-spacing:0px" fill="#333">Мытищи</text>
<text x="340.0" y="130.0" style="font-family:Liberation Sans,sans-serif;font-size:14.6px;font-weight:normal;letter-spacing:0px" fill="none" stroke="#fff" stroke-opacity=".85" stroke-width="2.6" stroke-linejoin="round">Щёлково</text><text x="340.0" y="130.0" style="font-family:Liberation Sans,sans-serif;font-size:14.6px;font-weight:normal;letter-spacing:0px" fill="#333">Щёлково</text>
<text x="147.0" y="147.0" style="font-family:Liberation Sans,sans-serif;font-size:14.6px;font-weight:normal;letter-spacing:0px" fill="none" stroke="#fff" stroke-opacity=".85" stroke-width="2.6" stroke-linejoin="round">Химки</text><text x="147.0" y="147.0" style="font-family:Liberation Sans,sans-serif;font-size:14.6px;font-weight:normal;letter-spacing:0px" fill="#333">Химки</text>
<text x="91.0" y="193.0" style="font-family:Liberation Sans,sans-serif;font-size:14.6px;font-weight:normal;letter-spacing:0px" fill="none" stroke="#fff" stroke-opacity=".85" stroke-width="2.6" stroke-linejoin="round">Красногорск</text><text x="91.0" y="193.0" style="font-family:Liberation Sans,sans-serif;font-size:14.6px;font-weight:normal;letter-spacing:0px" fill="#333">Красногорск</text>
<text x="326.0" y="204.0" style="font-family:Liberation Sans,sans-serif;font-size:14.6px;font-weight:normal;letter-spacing:0px" fill="none" stroke="#fff" stroke-opacity=".85" stroke-width="2.6" stroke-linejoin="round">Балашиха</text><text x="326.0" y="204.0" style="font-family:Liberation Sans,sans-serif;font-size:14.6px;font-weight:normal;letter-spacing:0px" fill="#333">Балашиха</text>
<text x="487.0" y="213.0" style="font-family:Liberation Sans,sans-serif;font-size:14.6px;font-weight:normal;letter-spacing:0px" fill="none" stroke="#fff" stroke-opacity=".85" stroke-width="2.6" stroke-linejoin="round">Э</text><text x="487.0" y="213.0" style="font-family:Liberation Sans,sans-serif;font-size:14.6px;font-weight:normal;letter-spacing:0px" fill="#333">Э</text>
<text x="209.0" y="239.0" style="font-family:Liberation Sans,sans-serif;font-size:14.6px;font-weight:normal;letter-spacing:0px" fill="none" stroke="#fff" stroke-opacity=".85" stroke-width="2.6" stroke-linejoin="round">Москва</text><text x="209.0" y="239.0" style="font-family:Liberation Sans,sans-serif;font-size:14.6px;font-weight:normal;letter-spacing:0px" fill="#333">Москва</text>
<text x="74.0" y="290.0" style="font-family:Liberation Sans,sans-serif;font-size:14.6px;font-weight:normal;letter-spacing:0px" fill="none" stroke="#fff" stroke-opacity=".85" stroke-width="2.6" stroke-linejoin="round">Одинцово</text><text x="74.0" y="290.0" style="font-family:Liberation Sans,sans-serif;font-size:14.6px;font-weight:normal;letter-spacing:0px" fill="#333">Одинцово</text>
<text x="302.0" y="286.0" style="font-family:Liberation Sans,sans-serif;font-size:14.6px;font-weight:normal;letter-spacing:0px" fill="none" stroke="#fff" stroke-opacity=".85" stroke-width="2.6" stroke-linejoin="round">Люберцы</text><text x="302.0" y="286.0" style="font-family:Liberation Sans,sans-serif;font-size:14.6px;font-weight:normal;letter-spacing:0px" fill="#333">Люберцы</text>
<text x="379.0" y="338.0" style="font-family:Liberation Sans,sans-serif;font-size:14.6px;font-weight:normal;letter-spacing:0px" fill="none" stroke="#fff" stroke-opacity=".85" stroke-width="2.6" stroke-linejoin="round">Жуковский</text><text x="379.0" y="338.0" style="font-family:Liberation Sans,sans-serif;font-size:14.6px;font-weight:normal;letter-spacing:0px" fill="#333">Жуковский</text>
<text x="420.0" y="355.0" style="font-family:Liberation Sans,sans-serif;font-size:14.6px;font-weight:normal;letter-spacing:0px" fill="none" stroke="#fff" stroke-opacity=".85" stroke-width="2.6" stroke-linejoin="round">Раменское</text><text x="420.0" y="355.0" style="font-family:Liberation Sans,sans-serif;font-size:14.6px;font-weight:normal;letter-spacing:0px" fill="#333">Раменское</text>
<text x="175.0" y="445.0" style="font-family:Liberation Sans,sans-serif;font-size:14.6px;font-weight:normal;letter-spacing:0px" fill="none" stroke="#fff" stroke-opacity=".85" stroke-width="2.6" stroke-linejoin="round">Подольск</text><text x="175.0" y="445.0" style="font-family:Liberation Sans,sans-serif;font-size:14.6px;font-weight:normal;letter-spacing:0px" fill="#333">Подольск</text>
<text x="248.0" y="442.0" style="font-family:Liberation Sans,sans-serif;font-size:14.6px;font-weight:normal;letter-spacing:0px" fill="none" stroke="#fff" stroke-opacity=".85" stroke-width="2.6" stroke-linejoin="round">Домодедово</text><text x="248.0" y="442.0" style="font-family:Liberation Sans,sans-serif;font-size:14.6px;font-weight:normal;letter-spacing:0px" fill="#333">Домодедово</text>
<text x="328.0" y="386.0" style="font-family:Liberation Sans,sans-serif;font-size:21px;font-weight:normal;letter-spacing:0px" fill="#c4c0cb">Московская</text>
<text x="346.0" y="413.0" style="font-family:Liberation Sans,sans-serif;font-size:21px;font-weight:normal;letter-spacing:0px" fill="#c4c0cb">область</text>
<text x="92.0" y="415.0" style="font-family:Liberation Sans,sans-serif;font-size:20px;font-weight:normal;letter-spacing:0px" fill="#c8c5ce">Москва</text>
<rect x="439.0" y="9.6" width="48" height="93" rx="6" fill="#7d8268" fill-opacity=".5"/>
<rect x="444.2" y="14.8" width="38.8" height="38.7" rx="4" fill="#c5d3e2" fill-opacity=".62"/>
<rect x="444.2" y="58.7" width="38.8" height="38.7" rx="4" fill="#c5d3e2" fill-opacity=".62"/>
<path d="M458.3,34.0 H467.3 M462.8,29.5 V38.5" stroke="#111" stroke-width="2.6"/>
<path d="M458.3,78.0 H467.3" stroke="#111" stroke-width="2.6"/>
<rect x="351.3" y="449.4" width="137.4" height="33.6" rx="3.5" fill="#2b2f2f" fill-opacity=".85"/>
<circle cx="370.6" cy="466.0" r="7.8" fill="#69b52b"/><path d="M367.0,466.0 L369.6,468.6 L374.4,463.6" fill="none" stroke="#fff" stroke-width="2"/>
<text x="388.5" y="472.0" style="font-family:Liberation Sans,sans-serif;font-size:14.5px;font-weight:bold" fill="#fff">Применить</text>
<rect x="4.5" y="473.2" width="62" height="14" fill="#fff" fill-opacity=".6"/>
<path d="M5.5,480.2 V486.2 H65.5 V480.2" fill="none" stroke="#111" stroke-width="1.6"/>
<text x="11.5" y="483.7" style="font-family:Liberation Sans,sans-serif;font-size:10px;font-weight:bold" fill="#111">10 km</text>
</svg>
<!--/MAP-->
<div id="frame"></div>
</body></html>
